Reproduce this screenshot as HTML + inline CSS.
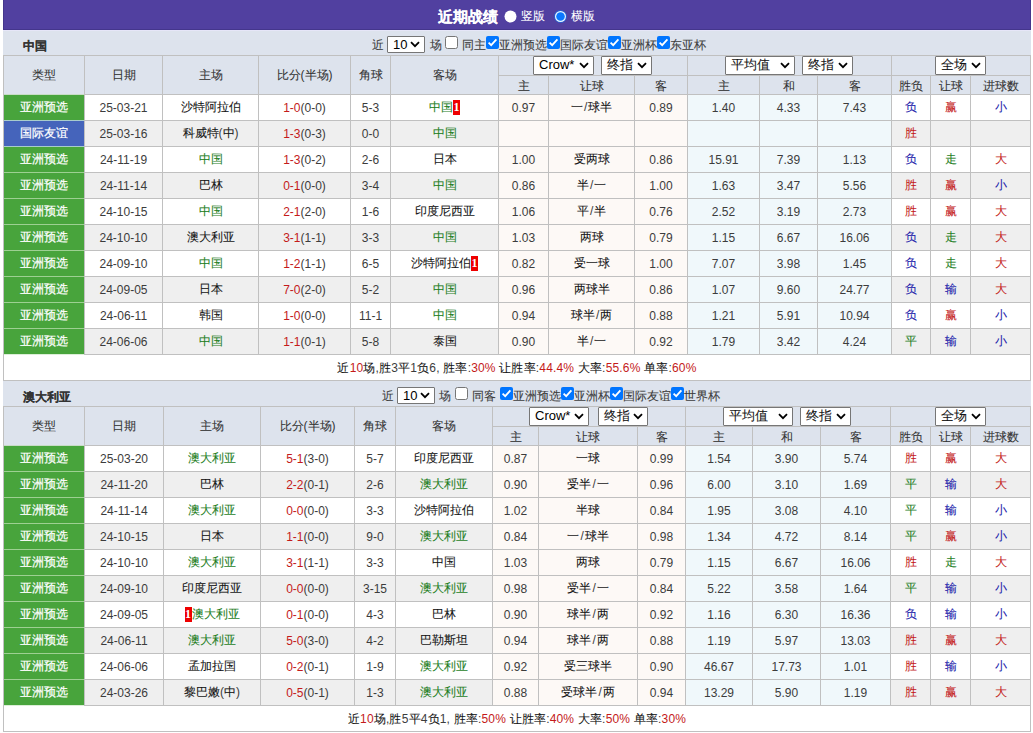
<!DOCTYPE html>
<html><head><meta charset="utf-8"><style>
html,body{margin:0;padding:0;background:#fff;}
body{width:1033px;height:733px;overflow:hidden;position:relative;font-family:"Liberation Sans",sans-serif;font-size:12px;color:#3c3c3c;}
div{position:absolute;box-sizing:border-box;}
.sel{border:1px solid #767676;border-radius:1px;background:#fff;box-sizing:content-box;color:#000;font-size:13px;line-height:17px;}
.sel span{position:absolute;left:5px;top:-1px;}
i{font-style:normal;-webkit-text-stroke:0.08px currentColor;}
div>span>i{color:#151515;}
.ty{font-weight:normal;}
.ty i{-webkit-text-stroke:0.2px #fff;}
.bd{display:inline-block;background:#e00;color:#fff;font-family:"Liberation Serif",serif;font-weight:bold;font-size:12px;line-height:15px;width:7px;text-align:center;}
</style></head><body>
<div style="left:3px;top:0px;width:1028px;height:30px;background:#5140a0;border:1px solid #44368c;border-top:none"></div>
<div style="left:438px;top:8px;white-space:nowrap;font-weight:bold;font-size:15px;color:#fff;line-height:18px;-webkit-text-stroke:0.3px #fff"><i>近期战绩</i></div>
<svg style="position:absolute;left:504px;top:10px" width="13" height="13" viewBox="0 0 13 13"><circle cx="6.5" cy="6.5" r="6" fill="#fff"/></svg>
<div style="left:521px;top:8px;white-space:nowrap;font-size:12px;color:#fff;line-height:16px"><i>竖版</i></div>
<svg style="position:absolute;left:554px;top:10px" width="13" height="13" viewBox="0 0 13 13"><circle cx="6.5" cy="6.5" r="6.5" fill="#2a5fd0"/><circle cx="6.5" cy="6.5" r="5.5" fill="#eaf6ff"/><circle cx="6.5" cy="6.5" r="4.3" fill="#0a78ff"/></svg>
<div style="left:571px;top:8px;white-space:nowrap;font-size:12px;color:#fff;line-height:16px"><i>横版</i></div>
<div style="left:3px;top:30px;width:1028px;height:25px;background:#dde3ed"></div>
<div style="left:23px;top:38px;white-space:nowrap;font-weight:bold;font-size:12px;color:#333;line-height:16px"><i>中国</i></div>

<div style="left:3px;top:55px;width:1028px;height:39px;background:#dde3ed"></div>
<div style="left:4px;top:56px;width:80px;height:38px;display:flex;align-items:center;justify-content:center;padding-top:1px;"><span><span style="color:#333"><i>类型</i></span></span></div>
<div style="left:85px;top:56px;width:77px;height:38px;display:flex;align-items:center;justify-content:center;padding-top:1px;"><span><span style="color:#333"><i>日期</i></span></span></div>
<div style="left:163px;top:56px;width:95px;height:38px;display:flex;align-items:center;justify-content:center;padding-top:1px;"><span><span style="color:#333"><i>主场</i></span></span></div>
<div style="left:259px;top:56px;width:91px;height:38px;display:flex;align-items:center;justify-content:center;padding-top:1px;"><span><span style="color:#333"><i>比分</i>(<i>半场</i>)</span></span></div>
<div style="left:351px;top:56px;width:39px;height:38px;display:flex;align-items:center;justify-content:center;padding-top:1px;"><span><span style="color:#333"><i>角球</i></span></span></div>
<div style="left:391px;top:56px;width:107px;height:38px;display:flex;align-items:center;justify-content:center;padding-top:1px;"><span><span style="color:#333"><i>客场</i></span></span></div>
<div style="left:499px;top:76px;width:49px;height:18px;display:flex;align-items:center;justify-content:center;padding-top:2px;"><span><span style="color:#333"><i>主</i></span></span></div>
<div style="left:549px;top:76px;width:85px;height:18px;display:flex;align-items:center;justify-content:center;padding-top:2px;"><span><span style="color:#333"><i>让球</i></span></span></div>
<div style="left:635px;top:76px;width:52px;height:18px;display:flex;align-items:center;justify-content:center;padding-top:2px;"><span><span style="color:#333"><i>客</i></span></span></div>
<div style="left:688px;top:76px;width:71px;height:18px;display:flex;align-items:center;justify-content:center;padding-top:2px;"><span><span style="color:#333"><i>主</i></span></span></div>
<div style="left:760px;top:76px;width:57px;height:18px;display:flex;align-items:center;justify-content:center;padding-top:2px;"><span><span style="color:#333"><i>和</i></span></span></div>
<div style="left:818px;top:76px;width:73px;height:18px;display:flex;align-items:center;justify-content:center;padding-top:2px;"><span><span style="color:#333"><i>客</i></span></span></div>
<div style="left:892px;top:76px;width:38px;height:18px;display:flex;align-items:center;justify-content:center;padding-top:2px;"><span><span style="color:#333"><i>胜负</i></span></span></div>
<div style="left:931px;top:76px;width:39px;height:18px;display:flex;align-items:center;justify-content:center;padding-top:2px;"><span><span style="color:#333"><i>让球</i></span></span></div>
<div style="left:971px;top:76px;width:59px;height:18px;display:flex;align-items:center;justify-content:center;padding-top:2px;"><span><span style="color:#333"><i>进球数</i></span></span></div>
<div style="left:3px;top:55px;width:1028px;height:1px;background:#c0c0c0"></div>
<div style="left:498px;top:75px;width:533px;height:1px;background:#c0c0c0"></div>
<div style="left:3px;top:94px;width:1028px;height:1px;background:#c0c0c0"></div>
<div style="left:3px;top:55px;width:1px;height:40px;background:#c0c0c0"></div>
<div style="left:84px;top:55px;width:1px;height:40px;background:#c0c0c0"></div>
<div style="left:162px;top:55px;width:1px;height:40px;background:#c0c0c0"></div>
<div style="left:258px;top:55px;width:1px;height:40px;background:#c0c0c0"></div>
<div style="left:350px;top:55px;width:1px;height:40px;background:#c0c0c0"></div>
<div style="left:390px;top:55px;width:1px;height:40px;background:#c0c0c0"></div>
<div style="left:498px;top:55px;width:1px;height:40px;background:#c0c0c0"></div>
<div style="left:687px;top:55px;width:1px;height:40px;background:#c0c0c0"></div>
<div style="left:891px;top:55px;width:1px;height:40px;background:#c0c0c0"></div>
<div style="left:1030px;top:55px;width:1px;height:40px;background:#c0c0c0"></div>
<div style="left:548px;top:75px;width:1px;height:20px;background:#c0c0c0"></div>
<div style="left:634px;top:75px;width:1px;height:20px;background:#c0c0c0"></div>
<div style="left:759px;top:75px;width:1px;height:20px;background:#c0c0c0"></div>
<div style="left:817px;top:75px;width:1px;height:20px;background:#c0c0c0"></div>
<div style="left:930px;top:75px;width:1px;height:20px;background:#c0c0c0"></div>
<div style="left:970px;top:75px;width:1px;height:20px;background:#c0c0c0"></div>
<div class="sel" style="left:387px;top:36px;width:36px;height:15px;"><span>10</span><svg width="10" height="7" viewBox="0 0 10 7" style="position:absolute;right:4px;top:4px"><path d="M1 1.2 L5 5.2 L9 1.2" stroke="#000" stroke-width="1.8" fill="none"/></svg></div>
<div class="sel" style="left:533px;top:56px;width:59px;height:17px;"><span>Crow*</span><svg width="10" height="7" viewBox="0 0 10 7" style="position:absolute;right:4px;top:5px"><path d="M1 1.2 L5 5.2 L9 1.2" stroke="#000" stroke-width="1.8" fill="none"/></svg></div>
<div class="sel" style="left:601px;top:56px;width:49px;height:17px;"><span><i>终指</i></span><svg width="10" height="7" viewBox="0 0 10 7" style="position:absolute;right:4px;top:5px"><path d="M1 1.2 L5 5.2 L9 1.2" stroke="#000" stroke-width="1.8" fill="none"/></svg></div>
<div class="sel" style="left:725px;top:56px;width:68px;height:17px;"><span><i>平均值</i></span><svg width="10" height="7" viewBox="0 0 10 7" style="position:absolute;right:4px;top:5px"><path d="M1 1.2 L5 5.2 L9 1.2" stroke="#000" stroke-width="1.8" fill="none"/></svg></div>
<div class="sel" style="left:802px;top:56px;width:49px;height:17px;"><span><i>终指</i></span><svg width="10" height="7" viewBox="0 0 10 7" style="position:absolute;right:4px;top:5px"><path d="M1 1.2 L5 5.2 L9 1.2" stroke="#000" stroke-width="1.8" fill="none"/></svg></div>
<div class="sel" style="left:935px;top:56px;width:49px;height:17px;"><span><i>全场</i></span><svg width="10" height="7" viewBox="0 0 10 7" style="position:absolute;right:4px;top:5px"><path d="M1 1.2 L5 5.2 L9 1.2" stroke="#000" stroke-width="1.8" fill="none"/></svg></div>
<div style="left:4px;top:95px;width:80px;height:25px;display:flex;align-items:center;justify-content:center;background:#48a43c;"><span><span style="color:#fff"><b class="ty"><i>亚洲预选</i></b></span></span></div>
<div style="left:85px;top:95px;width:77px;height:25px;display:flex;align-items:center;justify-content:center;background:#ffffff;"><span>25-03-21</span></div>
<div style="left:163px;top:95px;width:95px;height:25px;display:flex;align-items:center;justify-content:center;background:#ffffff;"><span><i>沙特阿拉伯</i></span></div>
<div style="left:259px;top:95px;width:91px;height:25px;display:flex;align-items:center;justify-content:center;background:#ffffff;"><span><span style="color:#c41a1a">1-0</span>(0-0)</span></div>
<div style="left:351px;top:95px;width:39px;height:25px;display:flex;align-items:center;justify-content:center;background:#ffffff;"><span>5-3</span></div>
<div style="left:391px;top:95px;width:107px;height:25px;display:flex;align-items:center;justify-content:center;background:#ffffff;"><span><span style="color:#1e7e1e"><i>中国</i><span class="bd">1</span></span></span></div>
<div style="left:499px;top:95px;width:49px;height:25px;display:flex;align-items:center;justify-content:center;background:#fdf9f6;"><span>0.97</span></div>
<div style="left:549px;top:95px;width:85px;height:25px;display:flex;align-items:center;justify-content:center;background:#fdf9f6;"><span><i>一</i><span style="margin:0 1px 0 1.5px">/</span><i>球半</i></span></div>
<div style="left:635px;top:95px;width:52px;height:25px;display:flex;align-items:center;justify-content:center;background:#fdf9f6;"><span>0.89</span></div>
<div style="left:688px;top:95px;width:71px;height:25px;display:flex;align-items:center;justify-content:center;background:#f0f8fb;"><span>1.40</span></div>
<div style="left:760px;top:95px;width:57px;height:25px;display:flex;align-items:center;justify-content:center;background:#f0f8fb;"><span>4.33</span></div>
<div style="left:818px;top:95px;width:73px;height:25px;display:flex;align-items:center;justify-content:center;background:#f0f8fb;"><span>7.43</span></div>
<div style="left:892px;top:95px;width:38px;height:25px;display:flex;align-items:center;justify-content:center;background:#ffffff;"><span><span style="color:#1a1aaa"><i>负</i></span></span></div>
<div style="left:931px;top:95px;width:39px;height:25px;display:flex;align-items:center;justify-content:center;background:#ffffff;"><span><span style="color:#c41a1a"><i>赢</i></span></span></div>
<div style="left:971px;top:95px;width:59px;height:25px;display:flex;align-items:center;justify-content:center;background:#ffffff;"><span><span style="color:#1a1aaa"><i>小</i></span></span></div>
<div style="left:3px;top:120px;width:1028px;height:1px;background:#c0c0c0"></div>
<div style="left:3px;top:94px;width:1px;height:27px;background:#c0c0c0"></div>
<div style="left:84px;top:94px;width:1px;height:27px;background:#c0c0c0"></div>
<div style="left:162px;top:94px;width:1px;height:27px;background:#c0c0c0"></div>
<div style="left:258px;top:94px;width:1px;height:27px;background:#c0c0c0"></div>
<div style="left:350px;top:94px;width:1px;height:27px;background:#c0c0c0"></div>
<div style="left:390px;top:94px;width:1px;height:27px;background:#c0c0c0"></div>
<div style="left:498px;top:94px;width:1px;height:27px;background:#c0c0c0"></div>
<div style="left:548px;top:94px;width:1px;height:27px;background:#c0c0c0"></div>
<div style="left:634px;top:94px;width:1px;height:27px;background:#c0c0c0"></div>
<div style="left:687px;top:94px;width:1px;height:27px;background:#c0c0c0"></div>
<div style="left:759px;top:94px;width:1px;height:27px;background:#c0c0c0"></div>
<div style="left:817px;top:94px;width:1px;height:27px;background:#c0c0c0"></div>
<div style="left:891px;top:94px;width:1px;height:27px;background:#c0c0c0"></div>
<div style="left:930px;top:94px;width:1px;height:27px;background:#c0c0c0"></div>
<div style="left:970px;top:94px;width:1px;height:27px;background:#c0c0c0"></div>
<div style="left:1030px;top:94px;width:1px;height:27px;background:#c0c0c0"></div>
<div style="left:4px;top:121px;width:80px;height:25px;display:flex;align-items:center;justify-content:center;background:#4564bb;"><span><span style="color:#fff"><b class="ty"><i>国际友谊</i></b></span></span></div>
<div style="left:85px;top:121px;width:77px;height:25px;display:flex;align-items:center;justify-content:center;background:#efefef;"><span>25-03-16</span></div>
<div style="left:163px;top:121px;width:95px;height:25px;display:flex;align-items:center;justify-content:center;background:#efefef;"><span><i>科威特</i>(<i>中</i>)</span></div>
<div style="left:259px;top:121px;width:91px;height:25px;display:flex;align-items:center;justify-content:center;background:#efefef;"><span><span style="color:#c41a1a">1-3</span>(0-3)</span></div>
<div style="left:351px;top:121px;width:39px;height:25px;display:flex;align-items:center;justify-content:center;background:#efefef;"><span>0-0</span></div>
<div style="left:391px;top:121px;width:107px;height:25px;display:flex;align-items:center;justify-content:center;background:#efefef;"><span><span style="color:#1e7e1e"><i>中国</i></span></span></div>
<div style="left:499px;top:121px;width:49px;height:25px;display:flex;align-items:center;justify-content:center;background:#fdf9f6;"></div>
<div style="left:549px;top:121px;width:85px;height:25px;display:flex;align-items:center;justify-content:center;background:#fdf9f6;"></div>
<div style="left:635px;top:121px;width:52px;height:25px;display:flex;align-items:center;justify-content:center;background:#fdf9f6;"></div>
<div style="left:688px;top:121px;width:71px;height:25px;display:flex;align-items:center;justify-content:center;background:#f0f8fb;"></div>
<div style="left:760px;top:121px;width:57px;height:25px;display:flex;align-items:center;justify-content:center;background:#f0f8fb;"></div>
<div style="left:818px;top:121px;width:73px;height:25px;display:flex;align-items:center;justify-content:center;background:#f0f8fb;"></div>
<div style="left:892px;top:121px;width:38px;height:25px;display:flex;align-items:center;justify-content:center;background:#efefef;"><span><span style="color:#c41a1a"><i>胜</i></span></span></div>
<div style="left:931px;top:121px;width:39px;height:25px;display:flex;align-items:center;justify-content:center;background:#efefef;"></div>
<div style="left:971px;top:121px;width:59px;height:25px;display:flex;align-items:center;justify-content:center;background:#efefef;"></div>
<div style="left:3px;top:146px;width:1028px;height:1px;background:#c0c0c0"></div>
<div style="left:3px;top:120px;width:1px;height:27px;background:#c0c0c0"></div>
<div style="left:84px;top:120px;width:1px;height:27px;background:#c0c0c0"></div>
<div style="left:162px;top:120px;width:1px;height:27px;background:#c0c0c0"></div>
<div style="left:258px;top:120px;width:1px;height:27px;background:#c0c0c0"></div>
<div style="left:350px;top:120px;width:1px;height:27px;background:#c0c0c0"></div>
<div style="left:390px;top:120px;width:1px;height:27px;background:#c0c0c0"></div>
<div style="left:498px;top:120px;width:1px;height:27px;background:#c0c0c0"></div>
<div style="left:548px;top:120px;width:1px;height:27px;background:#c0c0c0"></div>
<div style="left:634px;top:120px;width:1px;height:27px;background:#c0c0c0"></div>
<div style="left:687px;top:120px;width:1px;height:27px;background:#c0c0c0"></div>
<div style="left:759px;top:120px;width:1px;height:27px;background:#c0c0c0"></div>
<div style="left:817px;top:120px;width:1px;height:27px;background:#c0c0c0"></div>
<div style="left:891px;top:120px;width:1px;height:27px;background:#c0c0c0"></div>
<div style="left:930px;top:120px;width:1px;height:27px;background:#c0c0c0"></div>
<div style="left:970px;top:120px;width:1px;height:27px;background:#c0c0c0"></div>
<div style="left:1030px;top:120px;width:1px;height:27px;background:#c0c0c0"></div>
<div style="left:4px;top:147px;width:80px;height:25px;display:flex;align-items:center;justify-content:center;background:#48a43c;"><span><span style="color:#fff"><b class="ty"><i>亚洲预选</i></b></span></span></div>
<div style="left:85px;top:147px;width:77px;height:25px;display:flex;align-items:center;justify-content:center;background:#ffffff;"><span>24-11-19</span></div>
<div style="left:163px;top:147px;width:95px;height:25px;display:flex;align-items:center;justify-content:center;background:#ffffff;"><span><span style="color:#1e7e1e"><i>中国</i></span></span></div>
<div style="left:259px;top:147px;width:91px;height:25px;display:flex;align-items:center;justify-content:center;background:#ffffff;"><span><span style="color:#c41a1a">1-3</span>(0-2)</span></div>
<div style="left:351px;top:147px;width:39px;height:25px;display:flex;align-items:center;justify-content:center;background:#ffffff;"><span>2-6</span></div>
<div style="left:391px;top:147px;width:107px;height:25px;display:flex;align-items:center;justify-content:center;background:#ffffff;"><span><i>日本</i></span></div>
<div style="left:499px;top:147px;width:49px;height:25px;display:flex;align-items:center;justify-content:center;background:#fdf9f6;"><span>1.00</span></div>
<div style="left:549px;top:147px;width:85px;height:25px;display:flex;align-items:center;justify-content:center;background:#fdf9f6;"><span><i>受两球</i></span></div>
<div style="left:635px;top:147px;width:52px;height:25px;display:flex;align-items:center;justify-content:center;background:#fdf9f6;"><span>0.86</span></div>
<div style="left:688px;top:147px;width:71px;height:25px;display:flex;align-items:center;justify-content:center;background:#f0f8fb;"><span>15.91</span></div>
<div style="left:760px;top:147px;width:57px;height:25px;display:flex;align-items:center;justify-content:center;background:#f0f8fb;"><span>7.39</span></div>
<div style="left:818px;top:147px;width:73px;height:25px;display:flex;align-items:center;justify-content:center;background:#f0f8fb;"><span>1.13</span></div>
<div style="left:892px;top:147px;width:38px;height:25px;display:flex;align-items:center;justify-content:center;background:#ffffff;"><span><span style="color:#1a1aaa"><i>负</i></span></span></div>
<div style="left:931px;top:147px;width:39px;height:25px;display:flex;align-items:center;justify-content:center;background:#ffffff;"><span><span style="color:#1e7e1e"><i>走</i></span></span></div>
<div style="left:971px;top:147px;width:59px;height:25px;display:flex;align-items:center;justify-content:center;background:#ffffff;"><span><span style="color:#c41a1a"><i>大</i></span></span></div>
<div style="left:3px;top:172px;width:1028px;height:1px;background:#c0c0c0"></div>
<div style="left:3px;top:146px;width:1px;height:27px;background:#c0c0c0"></div>
<div style="left:84px;top:146px;width:1px;height:27px;background:#c0c0c0"></div>
<div style="left:162px;top:146px;width:1px;height:27px;background:#c0c0c0"></div>
<div style="left:258px;top:146px;width:1px;height:27px;background:#c0c0c0"></div>
<div style="left:350px;top:146px;width:1px;height:27px;background:#c0c0c0"></div>
<div style="left:390px;top:146px;width:1px;height:27px;background:#c0c0c0"></div>
<div style="left:498px;top:146px;width:1px;height:27px;background:#c0c0c0"></div>
<div style="left:548px;top:146px;width:1px;height:27px;background:#c0c0c0"></div>
<div style="left:634px;top:146px;width:1px;height:27px;background:#c0c0c0"></div>
<div style="left:687px;top:146px;width:1px;height:27px;background:#c0c0c0"></div>
<div style="left:759px;top:146px;width:1px;height:27px;background:#c0c0c0"></div>
<div style="left:817px;top:146px;width:1px;height:27px;background:#c0c0c0"></div>
<div style="left:891px;top:146px;width:1px;height:27px;background:#c0c0c0"></div>
<div style="left:930px;top:146px;width:1px;height:27px;background:#c0c0c0"></div>
<div style="left:970px;top:146px;width:1px;height:27px;background:#c0c0c0"></div>
<div style="left:1030px;top:146px;width:1px;height:27px;background:#c0c0c0"></div>
<div style="left:4px;top:173px;width:80px;height:25px;display:flex;align-items:center;justify-content:center;background:#48a43c;"><span><span style="color:#fff"><b class="ty"><i>亚洲预选</i></b></span></span></div>
<div style="left:85px;top:173px;width:77px;height:25px;display:flex;align-items:center;justify-content:center;background:#efefef;"><span>24-11-14</span></div>
<div style="left:163px;top:173px;width:95px;height:25px;display:flex;align-items:center;justify-content:center;background:#efefef;"><span><i>巴林</i></span></div>
<div style="left:259px;top:173px;width:91px;height:25px;display:flex;align-items:center;justify-content:center;background:#efefef;"><span><span style="color:#c41a1a">0-1</span>(0-0)</span></div>
<div style="left:351px;top:173px;width:39px;height:25px;display:flex;align-items:center;justify-content:center;background:#efefef;"><span>3-4</span></div>
<div style="left:391px;top:173px;width:107px;height:25px;display:flex;align-items:center;justify-content:center;background:#efefef;"><span><span style="color:#1e7e1e"><i>中国</i></span></span></div>
<div style="left:499px;top:173px;width:49px;height:25px;display:flex;align-items:center;justify-content:center;background:#fdf9f6;"><span>0.86</span></div>
<div style="left:549px;top:173px;width:85px;height:25px;display:flex;align-items:center;justify-content:center;background:#fdf9f6;"><span><i>半</i><span style="margin:0 1px 0 1.5px">/</span><i>一</i></span></div>
<div style="left:635px;top:173px;width:52px;height:25px;display:flex;align-items:center;justify-content:center;background:#fdf9f6;"><span>1.00</span></div>
<div style="left:688px;top:173px;width:71px;height:25px;display:flex;align-items:center;justify-content:center;background:#f0f8fb;"><span>1.63</span></div>
<div style="left:760px;top:173px;width:57px;height:25px;display:flex;align-items:center;justify-content:center;background:#f0f8fb;"><span>3.47</span></div>
<div style="left:818px;top:173px;width:73px;height:25px;display:flex;align-items:center;justify-content:center;background:#f0f8fb;"><span>5.56</span></div>
<div style="left:892px;top:173px;width:38px;height:25px;display:flex;align-items:center;justify-content:center;background:#efefef;"><span><span style="color:#c41a1a"><i>胜</i></span></span></div>
<div style="left:931px;top:173px;width:39px;height:25px;display:flex;align-items:center;justify-content:center;background:#efefef;"><span><span style="color:#c41a1a"><i>赢</i></span></span></div>
<div style="left:971px;top:173px;width:59px;height:25px;display:flex;align-items:center;justify-content:center;background:#efefef;"><span><span style="color:#1a1aaa"><i>小</i></span></span></div>
<div style="left:3px;top:198px;width:1028px;height:1px;background:#c0c0c0"></div>
<div style="left:3px;top:172px;width:1px;height:27px;background:#c0c0c0"></div>
<div style="left:84px;top:172px;width:1px;height:27px;background:#c0c0c0"></div>
<div style="left:162px;top:172px;width:1px;height:27px;background:#c0c0c0"></div>
<div style="left:258px;top:172px;width:1px;height:27px;background:#c0c0c0"></div>
<div style="left:350px;top:172px;width:1px;height:27px;background:#c0c0c0"></div>
<div style="left:390px;top:172px;width:1px;height:27px;background:#c0c0c0"></div>
<div style="left:498px;top:172px;width:1px;height:27px;background:#c0c0c0"></div>
<div style="left:548px;top:172px;width:1px;height:27px;background:#c0c0c0"></div>
<div style="left:634px;top:172px;width:1px;height:27px;background:#c0c0c0"></div>
<div style="left:687px;top:172px;width:1px;height:27px;background:#c0c0c0"></div>
<div style="left:759px;top:172px;width:1px;height:27px;background:#c0c0c0"></div>
<div style="left:817px;top:172px;width:1px;height:27px;background:#c0c0c0"></div>
<div style="left:891px;top:172px;width:1px;height:27px;background:#c0c0c0"></div>
<div style="left:930px;top:172px;width:1px;height:27px;background:#c0c0c0"></div>
<div style="left:970px;top:172px;width:1px;height:27px;background:#c0c0c0"></div>
<div style="left:1030px;top:172px;width:1px;height:27px;background:#c0c0c0"></div>
<div style="left:4px;top:199px;width:80px;height:25px;display:flex;align-items:center;justify-content:center;background:#48a43c;"><span><span style="color:#fff"><b class="ty"><i>亚洲预选</i></b></span></span></div>
<div style="left:85px;top:199px;width:77px;height:25px;display:flex;align-items:center;justify-content:center;background:#ffffff;"><span>24-10-15</span></div>
<div style="left:163px;top:199px;width:95px;height:25px;display:flex;align-items:center;justify-content:center;background:#ffffff;"><span><span style="color:#1e7e1e"><i>中国</i></span></span></div>
<div style="left:259px;top:199px;width:91px;height:25px;display:flex;align-items:center;justify-content:center;background:#ffffff;"><span><span style="color:#c41a1a">2-1</span>(2-0)</span></div>
<div style="left:351px;top:199px;width:39px;height:25px;display:flex;align-items:center;justify-content:center;background:#ffffff;"><span>1-6</span></div>
<div style="left:391px;top:199px;width:107px;height:25px;display:flex;align-items:center;justify-content:center;background:#ffffff;"><span><i>印度尼西亚</i></span></div>
<div style="left:499px;top:199px;width:49px;height:25px;display:flex;align-items:center;justify-content:center;background:#fdf9f6;"><span>1.06</span></div>
<div style="left:549px;top:199px;width:85px;height:25px;display:flex;align-items:center;justify-content:center;background:#fdf9f6;"><span><i>平</i><span style="margin:0 1px 0 1.5px">/</span><i>半</i></span></div>
<div style="left:635px;top:199px;width:52px;height:25px;display:flex;align-items:center;justify-content:center;background:#fdf9f6;"><span>0.76</span></div>
<div style="left:688px;top:199px;width:71px;height:25px;display:flex;align-items:center;justify-content:center;background:#f0f8fb;"><span>2.52</span></div>
<div style="left:760px;top:199px;width:57px;height:25px;display:flex;align-items:center;justify-content:center;background:#f0f8fb;"><span>3.19</span></div>
<div style="left:818px;top:199px;width:73px;height:25px;display:flex;align-items:center;justify-content:center;background:#f0f8fb;"><span>2.73</span></div>
<div style="left:892px;top:199px;width:38px;height:25px;display:flex;align-items:center;justify-content:center;background:#ffffff;"><span><span style="color:#c41a1a"><i>胜</i></span></span></div>
<div style="left:931px;top:199px;width:39px;height:25px;display:flex;align-items:center;justify-content:center;background:#ffffff;"><span><span style="color:#c41a1a"><i>赢</i></span></span></div>
<div style="left:971px;top:199px;width:59px;height:25px;display:flex;align-items:center;justify-content:center;background:#ffffff;"><span><span style="color:#c41a1a"><i>大</i></span></span></div>
<div style="left:3px;top:224px;width:1028px;height:1px;background:#c0c0c0"></div>
<div style="left:3px;top:198px;width:1px;height:27px;background:#c0c0c0"></div>
<div style="left:84px;top:198px;width:1px;height:27px;background:#c0c0c0"></div>
<div style="left:162px;top:198px;width:1px;height:27px;background:#c0c0c0"></div>
<div style="left:258px;top:198px;width:1px;height:27px;background:#c0c0c0"></div>
<div style="left:350px;top:198px;width:1px;height:27px;background:#c0c0c0"></div>
<div style="left:390px;top:198px;width:1px;height:27px;background:#c0c0c0"></div>
<div style="left:498px;top:198px;width:1px;height:27px;background:#c0c0c0"></div>
<div style="left:548px;top:198px;width:1px;height:27px;background:#c0c0c0"></div>
<div style="left:634px;top:198px;width:1px;height:27px;background:#c0c0c0"></div>
<div style="left:687px;top:198px;width:1px;height:27px;background:#c0c0c0"></div>
<div style="left:759px;top:198px;width:1px;height:27px;background:#c0c0c0"></div>
<div style="left:817px;top:198px;width:1px;height:27px;background:#c0c0c0"></div>
<div style="left:891px;top:198px;width:1px;height:27px;background:#c0c0c0"></div>
<div style="left:930px;top:198px;width:1px;height:27px;background:#c0c0c0"></div>
<div style="left:970px;top:198px;width:1px;height:27px;background:#c0c0c0"></div>
<div style="left:1030px;top:198px;width:1px;height:27px;background:#c0c0c0"></div>
<div style="left:4px;top:225px;width:80px;height:25px;display:flex;align-items:center;justify-content:center;background:#48a43c;"><span><span style="color:#fff"><b class="ty"><i>亚洲预选</i></b></span></span></div>
<div style="left:85px;top:225px;width:77px;height:25px;display:flex;align-items:center;justify-content:center;background:#efefef;"><span>24-10-10</span></div>
<div style="left:163px;top:225px;width:95px;height:25px;display:flex;align-items:center;justify-content:center;background:#efefef;"><span><i>澳大利亚</i></span></div>
<div style="left:259px;top:225px;width:91px;height:25px;display:flex;align-items:center;justify-content:center;background:#efefef;"><span><span style="color:#c41a1a">3-1</span>(1-1)</span></div>
<div style="left:351px;top:225px;width:39px;height:25px;display:flex;align-items:center;justify-content:center;background:#efefef;"><span>3-3</span></div>
<div style="left:391px;top:225px;width:107px;height:25px;display:flex;align-items:center;justify-content:center;background:#efefef;"><span><span style="color:#1e7e1e"><i>中国</i></span></span></div>
<div style="left:499px;top:225px;width:49px;height:25px;display:flex;align-items:center;justify-content:center;background:#fdf9f6;"><span>1.03</span></div>
<div style="left:549px;top:225px;width:85px;height:25px;display:flex;align-items:center;justify-content:center;background:#fdf9f6;"><span><i>两球</i></span></div>
<div style="left:635px;top:225px;width:52px;height:25px;display:flex;align-items:center;justify-content:center;background:#fdf9f6;"><span>0.79</span></div>
<div style="left:688px;top:225px;width:71px;height:25px;display:flex;align-items:center;justify-content:center;background:#f0f8fb;"><span>1.15</span></div>
<div style="left:760px;top:225px;width:57px;height:25px;display:flex;align-items:center;justify-content:center;background:#f0f8fb;"><span>6.67</span></div>
<div style="left:818px;top:225px;width:73px;height:25px;display:flex;align-items:center;justify-content:center;background:#f0f8fb;"><span>16.06</span></div>
<div style="left:892px;top:225px;width:38px;height:25px;display:flex;align-items:center;justify-content:center;background:#efefef;"><span><span style="color:#1a1aaa"><i>负</i></span></span></div>
<div style="left:931px;top:225px;width:39px;height:25px;display:flex;align-items:center;justify-content:center;background:#efefef;"><span><span style="color:#1e7e1e"><i>走</i></span></span></div>
<div style="left:971px;top:225px;width:59px;height:25px;display:flex;align-items:center;justify-content:center;background:#efefef;"><span><span style="color:#c41a1a"><i>大</i></span></span></div>
<div style="left:3px;top:250px;width:1028px;height:1px;background:#c0c0c0"></div>
<div style="left:3px;top:224px;width:1px;height:27px;background:#c0c0c0"></div>
<div style="left:84px;top:224px;width:1px;height:27px;background:#c0c0c0"></div>
<div style="left:162px;top:224px;width:1px;height:27px;background:#c0c0c0"></div>
<div style="left:258px;top:224px;width:1px;height:27px;background:#c0c0c0"></div>
<div style="left:350px;top:224px;width:1px;height:27px;background:#c0c0c0"></div>
<div style="left:390px;top:224px;width:1px;height:27px;background:#c0c0c0"></div>
<div style="left:498px;top:224px;width:1px;height:27px;background:#c0c0c0"></div>
<div style="left:548px;top:224px;width:1px;height:27px;background:#c0c0c0"></div>
<div style="left:634px;top:224px;width:1px;height:27px;background:#c0c0c0"></div>
<div style="left:687px;top:224px;width:1px;height:27px;background:#c0c0c0"></div>
<div style="left:759px;top:224px;width:1px;height:27px;background:#c0c0c0"></div>
<div style="left:817px;top:224px;width:1px;height:27px;background:#c0c0c0"></div>
<div style="left:891px;top:224px;width:1px;height:27px;background:#c0c0c0"></div>
<div style="left:930px;top:224px;width:1px;height:27px;background:#c0c0c0"></div>
<div style="left:970px;top:224px;width:1px;height:27px;background:#c0c0c0"></div>
<div style="left:1030px;top:224px;width:1px;height:27px;background:#c0c0c0"></div>
<div style="left:4px;top:251px;width:80px;height:25px;display:flex;align-items:center;justify-content:center;background:#48a43c;"><span><span style="color:#fff"><b class="ty"><i>亚洲预选</i></b></span></span></div>
<div style="left:85px;top:251px;width:77px;height:25px;display:flex;align-items:center;justify-content:center;background:#ffffff;"><span>24-09-10</span></div>
<div style="left:163px;top:251px;width:95px;height:25px;display:flex;align-items:center;justify-content:center;background:#ffffff;"><span><span style="color:#1e7e1e"><i>中国</i></span></span></div>
<div style="left:259px;top:251px;width:91px;height:25px;display:flex;align-items:center;justify-content:center;background:#ffffff;"><span><span style="color:#c41a1a">1-2</span>(1-1)</span></div>
<div style="left:351px;top:251px;width:39px;height:25px;display:flex;align-items:center;justify-content:center;background:#ffffff;"><span>6-5</span></div>
<div style="left:391px;top:251px;width:107px;height:25px;display:flex;align-items:center;justify-content:center;background:#ffffff;"><span><i>沙特阿拉伯</i><span class="bd">1</span></span></div>
<div style="left:499px;top:251px;width:49px;height:25px;display:flex;align-items:center;justify-content:center;background:#fdf9f6;"><span>0.82</span></div>
<div style="left:549px;top:251px;width:85px;height:25px;display:flex;align-items:center;justify-content:center;background:#fdf9f6;"><span><i>受一球</i></span></div>
<div style="left:635px;top:251px;width:52px;height:25px;display:flex;align-items:center;justify-content:center;background:#fdf9f6;"><span>1.00</span></div>
<div style="left:688px;top:251px;width:71px;height:25px;display:flex;align-items:center;justify-content:center;background:#f0f8fb;"><span>7.07</span></div>
<div style="left:760px;top:251px;width:57px;height:25px;display:flex;align-items:center;justify-content:center;background:#f0f8fb;"><span>3.98</span></div>
<div style="left:818px;top:251px;width:73px;height:25px;display:flex;align-items:center;justify-content:center;background:#f0f8fb;"><span>1.45</span></div>
<div style="left:892px;top:251px;width:38px;height:25px;display:flex;align-items:center;justify-content:center;background:#ffffff;"><span><span style="color:#1a1aaa"><i>负</i></span></span></div>
<div style="left:931px;top:251px;width:39px;height:25px;display:flex;align-items:center;justify-content:center;background:#ffffff;"><span><span style="color:#1e7e1e"><i>走</i></span></span></div>
<div style="left:971px;top:251px;width:59px;height:25px;display:flex;align-items:center;justify-content:center;background:#ffffff;"><span><span style="color:#c41a1a"><i>大</i></span></span></div>
<div style="left:3px;top:276px;width:1028px;height:1px;background:#c0c0c0"></div>
<div style="left:3px;top:250px;width:1px;height:27px;background:#c0c0c0"></div>
<div style="left:84px;top:250px;width:1px;height:27px;background:#c0c0c0"></div>
<div style="left:162px;top:250px;width:1px;height:27px;background:#c0c0c0"></div>
<div style="left:258px;top:250px;width:1px;height:27px;background:#c0c0c0"></div>
<div style="left:350px;top:250px;width:1px;height:27px;background:#c0c0c0"></div>
<div style="left:390px;top:250px;width:1px;height:27px;background:#c0c0c0"></div>
<div style="left:498px;top:250px;width:1px;height:27px;background:#c0c0c0"></div>
<div style="left:548px;top:250px;width:1px;height:27px;background:#c0c0c0"></div>
<div style="left:634px;top:250px;width:1px;height:27px;background:#c0c0c0"></div>
<div style="left:687px;top:250px;width:1px;height:27px;background:#c0c0c0"></div>
<div style="left:759px;top:250px;width:1px;height:27px;background:#c0c0c0"></div>
<div style="left:817px;top:250px;width:1px;height:27px;background:#c0c0c0"></div>
<div style="left:891px;top:250px;width:1px;height:27px;background:#c0c0c0"></div>
<div style="left:930px;top:250px;width:1px;height:27px;background:#c0c0c0"></div>
<div style="left:970px;top:250px;width:1px;height:27px;background:#c0c0c0"></div>
<div style="left:1030px;top:250px;width:1px;height:27px;background:#c0c0c0"></div>
<div style="left:4px;top:277px;width:80px;height:25px;display:flex;align-items:center;justify-content:center;background:#48a43c;"><span><span style="color:#fff"><b class="ty"><i>亚洲预选</i></b></span></span></div>
<div style="left:85px;top:277px;width:77px;height:25px;display:flex;align-items:center;justify-content:center;background:#efefef;"><span>24-09-05</span></div>
<div style="left:163px;top:277px;width:95px;height:25px;display:flex;align-items:center;justify-content:center;background:#efefef;"><span><i>日本</i></span></div>
<div style="left:259px;top:277px;width:91px;height:25px;display:flex;align-items:center;justify-content:center;background:#efefef;"><span><span style="color:#c41a1a">7-0</span>(2-0)</span></div>
<div style="left:351px;top:277px;width:39px;height:25px;display:flex;align-items:center;justify-content:center;background:#efefef;"><span>5-2</span></div>
<div style="left:391px;top:277px;width:107px;height:25px;display:flex;align-items:center;justify-content:center;background:#efefef;"><span><span style="color:#1e7e1e"><i>中国</i></span></span></div>
<div style="left:499px;top:277px;width:49px;height:25px;display:flex;align-items:center;justify-content:center;background:#fdf9f6;"><span>0.96</span></div>
<div style="left:549px;top:277px;width:85px;height:25px;display:flex;align-items:center;justify-content:center;background:#fdf9f6;"><span><i>两球半</i></span></div>
<div style="left:635px;top:277px;width:52px;height:25px;display:flex;align-items:center;justify-content:center;background:#fdf9f6;"><span>0.86</span></div>
<div style="left:688px;top:277px;width:71px;height:25px;display:flex;align-items:center;justify-content:center;background:#f0f8fb;"><span>1.07</span></div>
<div style="left:760px;top:277px;width:57px;height:25px;display:flex;align-items:center;justify-content:center;background:#f0f8fb;"><span>9.60</span></div>
<div style="left:818px;top:277px;width:73px;height:25px;display:flex;align-items:center;justify-content:center;background:#f0f8fb;"><span>24.77</span></div>
<div style="left:892px;top:277px;width:38px;height:25px;display:flex;align-items:center;justify-content:center;background:#efefef;"><span><span style="color:#1a1aaa"><i>负</i></span></span></div>
<div style="left:931px;top:277px;width:39px;height:25px;display:flex;align-items:center;justify-content:center;background:#efefef;"><span><span style="color:#1a1aaa"><i>输</i></span></span></div>
<div style="left:971px;top:277px;width:59px;height:25px;display:flex;align-items:center;justify-content:center;background:#efefef;"><span><span style="color:#c41a1a"><i>大</i></span></span></div>
<div style="left:3px;top:302px;width:1028px;height:1px;background:#c0c0c0"></div>
<div style="left:3px;top:276px;width:1px;height:27px;background:#c0c0c0"></div>
<div style="left:84px;top:276px;width:1px;height:27px;background:#c0c0c0"></div>
<div style="left:162px;top:276px;width:1px;height:27px;background:#c0c0c0"></div>
<div style="left:258px;top:276px;width:1px;height:27px;background:#c0c0c0"></div>
<div style="left:350px;top:276px;width:1px;height:27px;background:#c0c0c0"></div>
<div style="left:390px;top:276px;width:1px;height:27px;background:#c0c0c0"></div>
<div style="left:498px;top:276px;width:1px;height:27px;background:#c0c0c0"></div>
<div style="left:548px;top:276px;width:1px;height:27px;background:#c0c0c0"></div>
<div style="left:634px;top:276px;width:1px;height:27px;background:#c0c0c0"></div>
<div style="left:687px;top:276px;width:1px;height:27px;background:#c0c0c0"></div>
<div style="left:759px;top:276px;width:1px;height:27px;background:#c0c0c0"></div>
<div style="left:817px;top:276px;width:1px;height:27px;background:#c0c0c0"></div>
<div style="left:891px;top:276px;width:1px;height:27px;background:#c0c0c0"></div>
<div style="left:930px;top:276px;width:1px;height:27px;background:#c0c0c0"></div>
<div style="left:970px;top:276px;width:1px;height:27px;background:#c0c0c0"></div>
<div style="left:1030px;top:276px;width:1px;height:27px;background:#c0c0c0"></div>
<div style="left:4px;top:303px;width:80px;height:25px;display:flex;align-items:center;justify-content:center;background:#48a43c;"><span><span style="color:#fff"><b class="ty"><i>亚洲预选</i></b></span></span></div>
<div style="left:85px;top:303px;width:77px;height:25px;display:flex;align-items:center;justify-content:center;background:#ffffff;"><span>24-06-11</span></div>
<div style="left:163px;top:303px;width:95px;height:25px;display:flex;align-items:center;justify-content:center;background:#ffffff;"><span><i>韩国</i></span></div>
<div style="left:259px;top:303px;width:91px;height:25px;display:flex;align-items:center;justify-content:center;background:#ffffff;"><span><span style="color:#c41a1a">1-0</span>(0-0)</span></div>
<div style="left:351px;top:303px;width:39px;height:25px;display:flex;align-items:center;justify-content:center;background:#ffffff;"><span>11-1</span></div>
<div style="left:391px;top:303px;width:107px;height:25px;display:flex;align-items:center;justify-content:center;background:#ffffff;"><span><span style="color:#1e7e1e"><i>中国</i></span></span></div>
<div style="left:499px;top:303px;width:49px;height:25px;display:flex;align-items:center;justify-content:center;background:#fdf9f6;"><span>0.94</span></div>
<div style="left:549px;top:303px;width:85px;height:25px;display:flex;align-items:center;justify-content:center;background:#fdf9f6;"><span><i>球半</i><span style="margin:0 1px 0 1.5px">/</span><i>两</i></span></div>
<div style="left:635px;top:303px;width:52px;height:25px;display:flex;align-items:center;justify-content:center;background:#fdf9f6;"><span>0.88</span></div>
<div style="left:688px;top:303px;width:71px;height:25px;display:flex;align-items:center;justify-content:center;background:#f0f8fb;"><span>1.21</span></div>
<div style="left:760px;top:303px;width:57px;height:25px;display:flex;align-items:center;justify-content:center;background:#f0f8fb;"><span>5.91</span></div>
<div style="left:818px;top:303px;width:73px;height:25px;display:flex;align-items:center;justify-content:center;background:#f0f8fb;"><span>10.94</span></div>
<div style="left:892px;top:303px;width:38px;height:25px;display:flex;align-items:center;justify-content:center;background:#ffffff;"><span><span style="color:#1a1aaa"><i>负</i></span></span></div>
<div style="left:931px;top:303px;width:39px;height:25px;display:flex;align-items:center;justify-content:center;background:#ffffff;"><span><span style="color:#c41a1a"><i>赢</i></span></span></div>
<div style="left:971px;top:303px;width:59px;height:25px;display:flex;align-items:center;justify-content:center;background:#ffffff;"><span><span style="color:#1a1aaa"><i>小</i></span></span></div>
<div style="left:3px;top:328px;width:1028px;height:1px;background:#c0c0c0"></div>
<div style="left:3px;top:302px;width:1px;height:27px;background:#c0c0c0"></div>
<div style="left:84px;top:302px;width:1px;height:27px;background:#c0c0c0"></div>
<div style="left:162px;top:302px;width:1px;height:27px;background:#c0c0c0"></div>
<div style="left:258px;top:302px;width:1px;height:27px;background:#c0c0c0"></div>
<div style="left:350px;top:302px;width:1px;height:27px;background:#c0c0c0"></div>
<div style="left:390px;top:302px;width:1px;height:27px;background:#c0c0c0"></div>
<div style="left:498px;top:302px;width:1px;height:27px;background:#c0c0c0"></div>
<div style="left:548px;top:302px;width:1px;height:27px;background:#c0c0c0"></div>
<div style="left:634px;top:302px;width:1px;height:27px;background:#c0c0c0"></div>
<div style="left:687px;top:302px;width:1px;height:27px;background:#c0c0c0"></div>
<div style="left:759px;top:302px;width:1px;height:27px;background:#c0c0c0"></div>
<div style="left:817px;top:302px;width:1px;height:27px;background:#c0c0c0"></div>
<div style="left:891px;top:302px;width:1px;height:27px;background:#c0c0c0"></div>
<div style="left:930px;top:302px;width:1px;height:27px;background:#c0c0c0"></div>
<div style="left:970px;top:302px;width:1px;height:27px;background:#c0c0c0"></div>
<div style="left:1030px;top:302px;width:1px;height:27px;background:#c0c0c0"></div>
<div style="left:4px;top:329px;width:80px;height:25px;display:flex;align-items:center;justify-content:center;background:#48a43c;"><span><span style="color:#fff"><b class="ty"><i>亚洲预选</i></b></span></span></div>
<div style="left:85px;top:329px;width:77px;height:25px;display:flex;align-items:center;justify-content:center;background:#efefef;"><span>24-06-06</span></div>
<div style="left:163px;top:329px;width:95px;height:25px;display:flex;align-items:center;justify-content:center;background:#efefef;"><span><span style="color:#1e7e1e"><i>中国</i></span></span></div>
<div style="left:259px;top:329px;width:91px;height:25px;display:flex;align-items:center;justify-content:center;background:#efefef;"><span><span style="color:#c41a1a">1-1</span>(0-1)</span></div>
<div style="left:351px;top:329px;width:39px;height:25px;display:flex;align-items:center;justify-content:center;background:#efefef;"><span>5-8</span></div>
<div style="left:391px;top:329px;width:107px;height:25px;display:flex;align-items:center;justify-content:center;background:#efefef;"><span><i>泰国</i></span></div>
<div style="left:499px;top:329px;width:49px;height:25px;display:flex;align-items:center;justify-content:center;background:#fdf9f6;"><span>0.90</span></div>
<div style="left:549px;top:329px;width:85px;height:25px;display:flex;align-items:center;justify-content:center;background:#fdf9f6;"><span><i>半</i><span style="margin:0 1px 0 1.5px">/</span><i>一</i></span></div>
<div style="left:635px;top:329px;width:52px;height:25px;display:flex;align-items:center;justify-content:center;background:#fdf9f6;"><span>0.92</span></div>
<div style="left:688px;top:329px;width:71px;height:25px;display:flex;align-items:center;justify-content:center;background:#f0f8fb;"><span>1.79</span></div>
<div style="left:760px;top:329px;width:57px;height:25px;display:flex;align-items:center;justify-content:center;background:#f0f8fb;"><span>3.42</span></div>
<div style="left:818px;top:329px;width:73px;height:25px;display:flex;align-items:center;justify-content:center;background:#f0f8fb;"><span>4.24</span></div>
<div style="left:892px;top:329px;width:38px;height:25px;display:flex;align-items:center;justify-content:center;background:#efefef;"><span><span style="color:#1e7e1e"><i>平</i></span></span></div>
<div style="left:931px;top:329px;width:39px;height:25px;display:flex;align-items:center;justify-content:center;background:#efefef;"><span><span style="color:#1a1aaa"><i>输</i></span></span></div>
<div style="left:971px;top:329px;width:59px;height:25px;display:flex;align-items:center;justify-content:center;background:#efefef;"><span><span style="color:#1a1aaa"><i>小</i></span></span></div>
<div style="left:3px;top:354px;width:1028px;height:1px;background:#c0c0c0"></div>
<div style="left:3px;top:328px;width:1px;height:27px;background:#c0c0c0"></div>
<div style="left:84px;top:328px;width:1px;height:27px;background:#c0c0c0"></div>
<div style="left:162px;top:328px;width:1px;height:27px;background:#c0c0c0"></div>
<div style="left:258px;top:328px;width:1px;height:27px;background:#c0c0c0"></div>
<div style="left:350px;top:328px;width:1px;height:27px;background:#c0c0c0"></div>
<div style="left:390px;top:328px;width:1px;height:27px;background:#c0c0c0"></div>
<div style="left:498px;top:328px;width:1px;height:27px;background:#c0c0c0"></div>
<div style="left:548px;top:328px;width:1px;height:27px;background:#c0c0c0"></div>
<div style="left:634px;top:328px;width:1px;height:27px;background:#c0c0c0"></div>
<div style="left:687px;top:328px;width:1px;height:27px;background:#c0c0c0"></div>
<div style="left:759px;top:328px;width:1px;height:27px;background:#c0c0c0"></div>
<div style="left:817px;top:328px;width:1px;height:27px;background:#c0c0c0"></div>
<div style="left:891px;top:328px;width:1px;height:27px;background:#c0c0c0"></div>
<div style="left:930px;top:328px;width:1px;height:27px;background:#c0c0c0"></div>
<div style="left:970px;top:328px;width:1px;height:27px;background:#c0c0c0"></div>
<div style="left:1030px;top:328px;width:1px;height:27px;background:#c0c0c0"></div>
<div style="left:4px;top:94px;width:80px;height:1px;background:#c8dcc6"></div>
<div style="left:4px;top:120px;width:80px;height:1px;background:#a8cccc"></div>
<div style="left:4px;top:146px;width:80px;height:1px;background:#a8cccc"></div>
<div style="left:4px;top:172px;width:80px;height:1px;background:#9dd092"></div>
<div style="left:4px;top:198px;width:80px;height:1px;background:#9dd092"></div>
<div style="left:4px;top:224px;width:80px;height:1px;background:#9dd092"></div>
<div style="left:4px;top:250px;width:80px;height:1px;background:#9dd092"></div>
<div style="left:4px;top:276px;width:80px;height:1px;background:#9dd092"></div>
<div style="left:4px;top:302px;width:80px;height:1px;background:#9dd092"></div>
<div style="left:4px;top:328px;width:80px;height:1px;background:#9dd092"></div>
<div style="left:4px;top:354px;width:80px;height:1px;background:#dcefd8"></div>
<div style="left:4px;top:355px;width:1026px;height:25px;display:flex;align-items:center;justify-content:center;background:#fff;letter-spacing:0.18px;padding-top:2px;"><span><i>近</i><span style="color:#c41a1a">10</span><i>场</i>,<i>胜</i>3<i>平</i>1<i>负</i>6, <i>胜率</i>:<span style="color:#c41a1a">30%</span> <i>让胜率</i>:<span style="color:#c41a1a">44.4%</span> <i>大率</i>:<span style="color:#c41a1a">55.6%</span> <i>单率</i>:<span style="color:#c41a1a">60%</span></span></div>
<div style="left:3px;top:380px;width:1028px;height:1px;background:#c0c0c0"></div>
<div style="left:3px;top:354px;width:1px;height:27px;background:#c0c0c0"></div>
<div style="left:1030px;top:354px;width:1px;height:27px;background:#c0c0c0"></div>
<div style="left:3px;top:30px;width:1028px;height:1px;background:#e6e6f8"></div>
<div style="left:372px;top:35px;white-space:nowrap;font-size:12px;line-height:18px;margin-top:1px"><i>近</i></div>
<div style="left:430px;top:35px;white-space:nowrap;font-size:12px;line-height:18px;margin-top:1px"><i>场</i></div>
<svg style="position:absolute;left:445px;top:36px" width="13" height="13" viewBox="0 0 13 13"><rect x="0.5" y="0.5" width="12" height="12" rx="2" fill="#fff" stroke="#767676"/></svg>
<div style="left:462px;top:35px;white-space:nowrap;font-size:12px;line-height:18px;margin-top:1px"><i>同主</i></div>
<svg style="position:absolute;left:486px;top:36px" width="13" height="13" viewBox="0 0 13 13"><rect x="0" y="0" width="13" height="13" rx="2" fill="#0075ff"/><path d="M2.6 6.6 L5.2 9.2 L10.4 3.4" stroke="#fff" stroke-width="1.8" fill="none"/></svg>
<div style="left:499px;top:35px;white-space:nowrap;font-size:12px;line-height:18px;margin-top:1px"><i>亚洲预选</i></div>
<svg style="position:absolute;left:547px;top:36px" width="13" height="13" viewBox="0 0 13 13"><rect x="0" y="0" width="13" height="13" rx="2" fill="#0075ff"/><path d="M2.6 6.6 L5.2 9.2 L10.4 3.4" stroke="#fff" stroke-width="1.8" fill="none"/></svg>
<div style="left:560px;top:35px;white-space:nowrap;font-size:12px;line-height:18px;margin-top:1px"><i>国际友谊</i></div>
<svg style="position:absolute;left:608px;top:36px" width="13" height="13" viewBox="0 0 13 13"><rect x="0" y="0" width="13" height="13" rx="2" fill="#0075ff"/><path d="M2.6 6.6 L5.2 9.2 L10.4 3.4" stroke="#fff" stroke-width="1.8" fill="none"/></svg>
<div style="left:621px;top:35px;white-space:nowrap;font-size:12px;line-height:18px;margin-top:1px"><i>亚洲杯</i></div>
<svg style="position:absolute;left:657px;top:36px" width="13" height="13" viewBox="0 0 13 13"><rect x="0" y="0" width="13" height="13" rx="2" fill="#0075ff"/><path d="M2.6 6.6 L5.2 9.2 L10.4 3.4" stroke="#fff" stroke-width="1.8" fill="none"/></svg>
<div style="left:670px;top:35px;white-space:nowrap;font-size:12px;line-height:18px;margin-top:1px"><i>东亚杯</i></div>
<div style="left:3px;top:381px;width:1028px;height:25px;background:#dde3ed"></div>
<div style="left:23px;top:389px;white-space:nowrap;font-weight:bold;font-size:12px;color:#333;line-height:16px"><i>澳大利亚</i></div>

<div style="left:3px;top:406px;width:1028px;height:39px;background:#dde3ed"></div>
<div style="left:4px;top:407px;width:80px;height:38px;display:flex;align-items:center;justify-content:center;padding-top:1px;"><span><span style="color:#333"><i>类型</i></span></span></div>
<div style="left:85px;top:407px;width:78px;height:38px;display:flex;align-items:center;justify-content:center;padding-top:1px;"><span><span style="color:#333"><i>日期</i></span></span></div>
<div style="left:164px;top:407px;width:96px;height:38px;display:flex;align-items:center;justify-content:center;padding-top:1px;"><span><span style="color:#333"><i>主场</i></span></span></div>
<div style="left:261px;top:407px;width:93px;height:38px;display:flex;align-items:center;justify-content:center;padding-top:1px;"><span><span style="color:#333"><i>比分</i>(<i>半场</i>)</span></span></div>
<div style="left:355px;top:407px;width:40px;height:38px;display:flex;align-items:center;justify-content:center;padding-top:1px;"><span><span style="color:#333"><i>角球</i></span></span></div>
<div style="left:396px;top:407px;width:96px;height:38px;display:flex;align-items:center;justify-content:center;padding-top:1px;"><span><span style="color:#333"><i>客场</i></span></span></div>
<div style="left:493px;top:427px;width:45px;height:18px;display:flex;align-items:center;justify-content:center;padding-top:2px;"><span><span style="color:#333"><i>主</i></span></span></div>
<div style="left:539px;top:427px;width:98px;height:18px;display:flex;align-items:center;justify-content:center;padding-top:2px;"><span><span style="color:#333"><i>让球</i></span></span></div>
<div style="left:638px;top:427px;width:47px;height:18px;display:flex;align-items:center;justify-content:center;padding-top:2px;"><span><span style="color:#333"><i>客</i></span></span></div>
<div style="left:686px;top:427px;width:66px;height:18px;display:flex;align-items:center;justify-content:center;padding-top:2px;"><span><span style="color:#333"><i>主</i></span></span></div>
<div style="left:753px;top:427px;width:67px;height:18px;display:flex;align-items:center;justify-content:center;padding-top:2px;"><span><span style="color:#333"><i>和</i></span></span></div>
<div style="left:821px;top:427px;width:69px;height:18px;display:flex;align-items:center;justify-content:center;padding-top:2px;"><span><span style="color:#333"><i>客</i></span></span></div>
<div style="left:891px;top:427px;width:39px;height:18px;display:flex;align-items:center;justify-content:center;padding-top:2px;"><span><span style="color:#333"><i>胜负</i></span></span></div>
<div style="left:931px;top:427px;width:39px;height:18px;display:flex;align-items:center;justify-content:center;padding-top:2px;"><span><span style="color:#333"><i>让球</i></span></span></div>
<div style="left:971px;top:427px;width:59px;height:18px;display:flex;align-items:center;justify-content:center;padding-top:2px;"><span><span style="color:#333"><i>进球数</i></span></span></div>
<div style="left:3px;top:406px;width:1028px;height:1px;background:#c0c0c0"></div>
<div style="left:492px;top:426px;width:539px;height:1px;background:#c0c0c0"></div>
<div style="left:3px;top:445px;width:1028px;height:1px;background:#c0c0c0"></div>
<div style="left:3px;top:406px;width:1px;height:40px;background:#c0c0c0"></div>
<div style="left:84px;top:406px;width:1px;height:40px;background:#c0c0c0"></div>
<div style="left:163px;top:406px;width:1px;height:40px;background:#c0c0c0"></div>
<div style="left:260px;top:406px;width:1px;height:40px;background:#c0c0c0"></div>
<div style="left:354px;top:406px;width:1px;height:40px;background:#c0c0c0"></div>
<div style="left:395px;top:406px;width:1px;height:40px;background:#c0c0c0"></div>
<div style="left:492px;top:406px;width:1px;height:40px;background:#c0c0c0"></div>
<div style="left:685px;top:406px;width:1px;height:40px;background:#c0c0c0"></div>
<div style="left:890px;top:406px;width:1px;height:40px;background:#c0c0c0"></div>
<div style="left:1030px;top:406px;width:1px;height:40px;background:#c0c0c0"></div>
<div style="left:538px;top:426px;width:1px;height:20px;background:#c0c0c0"></div>
<div style="left:637px;top:426px;width:1px;height:20px;background:#c0c0c0"></div>
<div style="left:752px;top:426px;width:1px;height:20px;background:#c0c0c0"></div>
<div style="left:820px;top:426px;width:1px;height:20px;background:#c0c0c0"></div>
<div style="left:930px;top:426px;width:1px;height:20px;background:#c0c0c0"></div>
<div style="left:970px;top:426px;width:1px;height:20px;background:#c0c0c0"></div>
<div class="sel" style="left:397px;top:387px;width:36px;height:15px;"><span>10</span><svg width="10" height="7" viewBox="0 0 10 7" style="position:absolute;right:4px;top:4px"><path d="M1 1.2 L5 5.2 L9 1.2" stroke="#000" stroke-width="1.8" fill="none"/></svg></div>
<div class="sel" style="left:529px;top:407px;width:58px;height:17px;"><span>Crow*</span><svg width="10" height="7" viewBox="0 0 10 7" style="position:absolute;right:4px;top:5px"><path d="M1 1.2 L5 5.2 L9 1.2" stroke="#000" stroke-width="1.8" fill="none"/></svg></div>
<div class="sel" style="left:598px;top:407px;width:48px;height:17px;"><span><i>终指</i></span><svg width="10" height="7" viewBox="0 0 10 7" style="position:absolute;right:4px;top:5px"><path d="M1 1.2 L5 5.2 L9 1.2" stroke="#000" stroke-width="1.8" fill="none"/></svg></div>
<div class="sel" style="left:723px;top:407px;width:68px;height:17px;"><span><i>平均值</i></span><svg width="10" height="7" viewBox="0 0 10 7" style="position:absolute;right:4px;top:5px"><path d="M1 1.2 L5 5.2 L9 1.2" stroke="#000" stroke-width="1.8" fill="none"/></svg></div>
<div class="sel" style="left:800px;top:407px;width:49px;height:17px;"><span><i>终指</i></span><svg width="10" height="7" viewBox="0 0 10 7" style="position:absolute;right:4px;top:5px"><path d="M1 1.2 L5 5.2 L9 1.2" stroke="#000" stroke-width="1.8" fill="none"/></svg></div>
<div class="sel" style="left:935px;top:407px;width:49px;height:17px;"><span><i>全场</i></span><svg width="10" height="7" viewBox="0 0 10 7" style="position:absolute;right:4px;top:5px"><path d="M1 1.2 L5 5.2 L9 1.2" stroke="#000" stroke-width="1.8" fill="none"/></svg></div>
<div style="left:4px;top:446px;width:80px;height:25px;display:flex;align-items:center;justify-content:center;background:#48a43c;"><span><span style="color:#fff"><b class="ty"><i>亚洲预选</i></b></span></span></div>
<div style="left:85px;top:446px;width:78px;height:25px;display:flex;align-items:center;justify-content:center;background:#ffffff;"><span>25-03-20</span></div>
<div style="left:164px;top:446px;width:96px;height:25px;display:flex;align-items:center;justify-content:center;background:#ffffff;"><span><span style="color:#1e7e1e"><i>澳大利亚</i></span></span></div>
<div style="left:261px;top:446px;width:93px;height:25px;display:flex;align-items:center;justify-content:center;background:#ffffff;"><span><span style="color:#c41a1a">5-1</span>(3-0)</span></div>
<div style="left:355px;top:446px;width:40px;height:25px;display:flex;align-items:center;justify-content:center;background:#ffffff;"><span>5-7</span></div>
<div style="left:396px;top:446px;width:96px;height:25px;display:flex;align-items:center;justify-content:center;background:#ffffff;"><span><i>印度尼西亚</i></span></div>
<div style="left:493px;top:446px;width:45px;height:25px;display:flex;align-items:center;justify-content:center;background:#fdf9f6;"><span>0.87</span></div>
<div style="left:539px;top:446px;width:98px;height:25px;display:flex;align-items:center;justify-content:center;background:#fdf9f6;"><span><i>一球</i></span></div>
<div style="left:638px;top:446px;width:47px;height:25px;display:flex;align-items:center;justify-content:center;background:#fdf9f6;"><span>0.99</span></div>
<div style="left:686px;top:446px;width:66px;height:25px;display:flex;align-items:center;justify-content:center;background:#f0f8fb;"><span>1.54</span></div>
<div style="left:753px;top:446px;width:67px;height:25px;display:flex;align-items:center;justify-content:center;background:#f0f8fb;"><span>3.90</span></div>
<div style="left:821px;top:446px;width:69px;height:25px;display:flex;align-items:center;justify-content:center;background:#f0f8fb;"><span>5.74</span></div>
<div style="left:891px;top:446px;width:39px;height:25px;display:flex;align-items:center;justify-content:center;background:#ffffff;"><span><span style="color:#c41a1a"><i>胜</i></span></span></div>
<div style="left:931px;top:446px;width:39px;height:25px;display:flex;align-items:center;justify-content:center;background:#ffffff;"><span><span style="color:#c41a1a"><i>赢</i></span></span></div>
<div style="left:971px;top:446px;width:59px;height:25px;display:flex;align-items:center;justify-content:center;background:#ffffff;"><span><span style="color:#c41a1a"><i>大</i></span></span></div>
<div style="left:3px;top:471px;width:1028px;height:1px;background:#c0c0c0"></div>
<div style="left:3px;top:445px;width:1px;height:27px;background:#c0c0c0"></div>
<div style="left:84px;top:445px;width:1px;height:27px;background:#c0c0c0"></div>
<div style="left:163px;top:445px;width:1px;height:27px;background:#c0c0c0"></div>
<div style="left:260px;top:445px;width:1px;height:27px;background:#c0c0c0"></div>
<div style="left:354px;top:445px;width:1px;height:27px;background:#c0c0c0"></div>
<div style="left:395px;top:445px;width:1px;height:27px;background:#c0c0c0"></div>
<div style="left:492px;top:445px;width:1px;height:27px;background:#c0c0c0"></div>
<div style="left:538px;top:445px;width:1px;height:27px;background:#c0c0c0"></div>
<div style="left:637px;top:445px;width:1px;height:27px;background:#c0c0c0"></div>
<div style="left:685px;top:445px;width:1px;height:27px;background:#c0c0c0"></div>
<div style="left:752px;top:445px;width:1px;height:27px;background:#c0c0c0"></div>
<div style="left:820px;top:445px;width:1px;height:27px;background:#c0c0c0"></div>
<div style="left:890px;top:445px;width:1px;height:27px;background:#c0c0c0"></div>
<div style="left:930px;top:445px;width:1px;height:27px;background:#c0c0c0"></div>
<div style="left:970px;top:445px;width:1px;height:27px;background:#c0c0c0"></div>
<div style="left:1030px;top:445px;width:1px;height:27px;background:#c0c0c0"></div>
<div style="left:4px;top:472px;width:80px;height:25px;display:flex;align-items:center;justify-content:center;background:#48a43c;"><span><span style="color:#fff"><b class="ty"><i>亚洲预选</i></b></span></span></div>
<div style="left:85px;top:472px;width:78px;height:25px;display:flex;align-items:center;justify-content:center;background:#efefef;"><span>24-11-20</span></div>
<div style="left:164px;top:472px;width:96px;height:25px;display:flex;align-items:center;justify-content:center;background:#efefef;"><span><i>巴林</i></span></div>
<div style="left:261px;top:472px;width:93px;height:25px;display:flex;align-items:center;justify-content:center;background:#efefef;"><span><span style="color:#c41a1a">2-2</span>(0-1)</span></div>
<div style="left:355px;top:472px;width:40px;height:25px;display:flex;align-items:center;justify-content:center;background:#efefef;"><span>2-6</span></div>
<div style="left:396px;top:472px;width:96px;height:25px;display:flex;align-items:center;justify-content:center;background:#efefef;"><span><span style="color:#1e7e1e"><i>澳大利亚</i></span></span></div>
<div style="left:493px;top:472px;width:45px;height:25px;display:flex;align-items:center;justify-content:center;background:#fdf9f6;"><span>0.90</span></div>
<div style="left:539px;top:472px;width:98px;height:25px;display:flex;align-items:center;justify-content:center;background:#fdf9f6;"><span><i>受半</i><span style="margin:0 1px 0 1.5px">/</span><i>一</i></span></div>
<div style="left:638px;top:472px;width:47px;height:25px;display:flex;align-items:center;justify-content:center;background:#fdf9f6;"><span>0.96</span></div>
<div style="left:686px;top:472px;width:66px;height:25px;display:flex;align-items:center;justify-content:center;background:#f0f8fb;"><span>6.00</span></div>
<div style="left:753px;top:472px;width:67px;height:25px;display:flex;align-items:center;justify-content:center;background:#f0f8fb;"><span>3.10</span></div>
<div style="left:821px;top:472px;width:69px;height:25px;display:flex;align-items:center;justify-content:center;background:#f0f8fb;"><span>1.69</span></div>
<div style="left:891px;top:472px;width:39px;height:25px;display:flex;align-items:center;justify-content:center;background:#efefef;"><span><span style="color:#1e7e1e"><i>平</i></span></span></div>
<div style="left:931px;top:472px;width:39px;height:25px;display:flex;align-items:center;justify-content:center;background:#efefef;"><span><span style="color:#1a1aaa"><i>输</i></span></span></div>
<div style="left:971px;top:472px;width:59px;height:25px;display:flex;align-items:center;justify-content:center;background:#efefef;"><span><span style="color:#c41a1a"><i>大</i></span></span></div>
<div style="left:3px;top:497px;width:1028px;height:1px;background:#c0c0c0"></div>
<div style="left:3px;top:471px;width:1px;height:27px;background:#c0c0c0"></div>
<div style="left:84px;top:471px;width:1px;height:27px;background:#c0c0c0"></div>
<div style="left:163px;top:471px;width:1px;height:27px;background:#c0c0c0"></div>
<div style="left:260px;top:471px;width:1px;height:27px;background:#c0c0c0"></div>
<div style="left:354px;top:471px;width:1px;height:27px;background:#c0c0c0"></div>
<div style="left:395px;top:471px;width:1px;height:27px;background:#c0c0c0"></div>
<div style="left:492px;top:471px;width:1px;height:27px;background:#c0c0c0"></div>
<div style="left:538px;top:471px;width:1px;height:27px;background:#c0c0c0"></div>
<div style="left:637px;top:471px;width:1px;height:27px;background:#c0c0c0"></div>
<div style="left:685px;top:471px;width:1px;height:27px;background:#c0c0c0"></div>
<div style="left:752px;top:471px;width:1px;height:27px;background:#c0c0c0"></div>
<div style="left:820px;top:471px;width:1px;height:27px;background:#c0c0c0"></div>
<div style="left:890px;top:471px;width:1px;height:27px;background:#c0c0c0"></div>
<div style="left:930px;top:471px;width:1px;height:27px;background:#c0c0c0"></div>
<div style="left:970px;top:471px;width:1px;height:27px;background:#c0c0c0"></div>
<div style="left:1030px;top:471px;width:1px;height:27px;background:#c0c0c0"></div>
<div style="left:4px;top:498px;width:80px;height:25px;display:flex;align-items:center;justify-content:center;background:#48a43c;"><span><span style="color:#fff"><b class="ty"><i>亚洲预选</i></b></span></span></div>
<div style="left:85px;top:498px;width:78px;height:25px;display:flex;align-items:center;justify-content:center;background:#ffffff;"><span>24-11-14</span></div>
<div style="left:164px;top:498px;width:96px;height:25px;display:flex;align-items:center;justify-content:center;background:#ffffff;"><span><span style="color:#1e7e1e"><i>澳大利亚</i></span></span></div>
<div style="left:261px;top:498px;width:93px;height:25px;display:flex;align-items:center;justify-content:center;background:#ffffff;"><span><span style="color:#c41a1a">0-0</span>(0-0)</span></div>
<div style="left:355px;top:498px;width:40px;height:25px;display:flex;align-items:center;justify-content:center;background:#ffffff;"><span>3-3</span></div>
<div style="left:396px;top:498px;width:96px;height:25px;display:flex;align-items:center;justify-content:center;background:#ffffff;"><span><i>沙特阿拉伯</i></span></div>
<div style="left:493px;top:498px;width:45px;height:25px;display:flex;align-items:center;justify-content:center;background:#fdf9f6;"><span>1.02</span></div>
<div style="left:539px;top:498px;width:98px;height:25px;display:flex;align-items:center;justify-content:center;background:#fdf9f6;"><span><i>半球</i></span></div>
<div style="left:638px;top:498px;width:47px;height:25px;display:flex;align-items:center;justify-content:center;background:#fdf9f6;"><span>0.84</span></div>
<div style="left:686px;top:498px;width:66px;height:25px;display:flex;align-items:center;justify-content:center;background:#f0f8fb;"><span>1.95</span></div>
<div style="left:753px;top:498px;width:67px;height:25px;display:flex;align-items:center;justify-content:center;background:#f0f8fb;"><span>3.08</span></div>
<div style="left:821px;top:498px;width:69px;height:25px;display:flex;align-items:center;justify-content:center;background:#f0f8fb;"><span>4.10</span></div>
<div style="left:891px;top:498px;width:39px;height:25px;display:flex;align-items:center;justify-content:center;background:#ffffff;"><span><span style="color:#1e7e1e"><i>平</i></span></span></div>
<div style="left:931px;top:498px;width:39px;height:25px;display:flex;align-items:center;justify-content:center;background:#ffffff;"><span><span style="color:#1a1aaa"><i>输</i></span></span></div>
<div style="left:971px;top:498px;width:59px;height:25px;display:flex;align-items:center;justify-content:center;background:#ffffff;"><span><span style="color:#1a1aaa"><i>小</i></span></span></div>
<div style="left:3px;top:523px;width:1028px;height:1px;background:#c0c0c0"></div>
<div style="left:3px;top:497px;width:1px;height:27px;background:#c0c0c0"></div>
<div style="left:84px;top:497px;width:1px;height:27px;background:#c0c0c0"></div>
<div style="left:163px;top:497px;width:1px;height:27px;background:#c0c0c0"></div>
<div style="left:260px;top:497px;width:1px;height:27px;background:#c0c0c0"></div>
<div style="left:354px;top:497px;width:1px;height:27px;background:#c0c0c0"></div>
<div style="left:395px;top:497px;width:1px;height:27px;background:#c0c0c0"></div>
<div style="left:492px;top:497px;width:1px;height:27px;background:#c0c0c0"></div>
<div style="left:538px;top:497px;width:1px;height:27px;background:#c0c0c0"></div>
<div style="left:637px;top:497px;width:1px;height:27px;background:#c0c0c0"></div>
<div style="left:685px;top:497px;width:1px;height:27px;background:#c0c0c0"></div>
<div style="left:752px;top:497px;width:1px;height:27px;background:#c0c0c0"></div>
<div style="left:820px;top:497px;width:1px;height:27px;background:#c0c0c0"></div>
<div style="left:890px;top:497px;width:1px;height:27px;background:#c0c0c0"></div>
<div style="left:930px;top:497px;width:1px;height:27px;background:#c0c0c0"></div>
<div style="left:970px;top:497px;width:1px;height:27px;background:#c0c0c0"></div>
<div style="left:1030px;top:497px;width:1px;height:27px;background:#c0c0c0"></div>
<div style="left:4px;top:524px;width:80px;height:25px;display:flex;align-items:center;justify-content:center;background:#48a43c;"><span><span style="color:#fff"><b class="ty"><i>亚洲预选</i></b></span></span></div>
<div style="left:85px;top:524px;width:78px;height:25px;display:flex;align-items:center;justify-content:center;background:#efefef;"><span>24-10-15</span></div>
<div style="left:164px;top:524px;width:96px;height:25px;display:flex;align-items:center;justify-content:center;background:#efefef;"><span><i>日本</i></span></div>
<div style="left:261px;top:524px;width:93px;height:25px;display:flex;align-items:center;justify-content:center;background:#efefef;"><span><span style="color:#c41a1a">1-1</span>(0-0)</span></div>
<div style="left:355px;top:524px;width:40px;height:25px;display:flex;align-items:center;justify-content:center;background:#efefef;"><span>9-0</span></div>
<div style="left:396px;top:524px;width:96px;height:25px;display:flex;align-items:center;justify-content:center;background:#efefef;"><span><span style="color:#1e7e1e"><i>澳大利亚</i></span></span></div>
<div style="left:493px;top:524px;width:45px;height:25px;display:flex;align-items:center;justify-content:center;background:#fdf9f6;"><span>0.84</span></div>
<div style="left:539px;top:524px;width:98px;height:25px;display:flex;align-items:center;justify-content:center;background:#fdf9f6;"><span><i>一</i><span style="margin:0 1px 0 1.5px">/</span><i>球半</i></span></div>
<div style="left:638px;top:524px;width:47px;height:25px;display:flex;align-items:center;justify-content:center;background:#fdf9f6;"><span>0.98</span></div>
<div style="left:686px;top:524px;width:66px;height:25px;display:flex;align-items:center;justify-content:center;background:#f0f8fb;"><span>1.34</span></div>
<div style="left:753px;top:524px;width:67px;height:25px;display:flex;align-items:center;justify-content:center;background:#f0f8fb;"><span>4.72</span></div>
<div style="left:821px;top:524px;width:69px;height:25px;display:flex;align-items:center;justify-content:center;background:#f0f8fb;"><span>8.14</span></div>
<div style="left:891px;top:524px;width:39px;height:25px;display:flex;align-items:center;justify-content:center;background:#efefef;"><span><span style="color:#1e7e1e"><i>平</i></span></span></div>
<div style="left:931px;top:524px;width:39px;height:25px;display:flex;align-items:center;justify-content:center;background:#efefef;"><span><span style="color:#c41a1a"><i>赢</i></span></span></div>
<div style="left:971px;top:524px;width:59px;height:25px;display:flex;align-items:center;justify-content:center;background:#efefef;"><span><span style="color:#1a1aaa"><i>小</i></span></span></div>
<div style="left:3px;top:549px;width:1028px;height:1px;background:#c0c0c0"></div>
<div style="left:3px;top:523px;width:1px;height:27px;background:#c0c0c0"></div>
<div style="left:84px;top:523px;width:1px;height:27px;background:#c0c0c0"></div>
<div style="left:163px;top:523px;width:1px;height:27px;background:#c0c0c0"></div>
<div style="left:260px;top:523px;width:1px;height:27px;background:#c0c0c0"></div>
<div style="left:354px;top:523px;width:1px;height:27px;background:#c0c0c0"></div>
<div style="left:395px;top:523px;width:1px;height:27px;background:#c0c0c0"></div>
<div style="left:492px;top:523px;width:1px;height:27px;background:#c0c0c0"></div>
<div style="left:538px;top:523px;width:1px;height:27px;background:#c0c0c0"></div>
<div style="left:637px;top:523px;width:1px;height:27px;background:#c0c0c0"></div>
<div style="left:685px;top:523px;width:1px;height:27px;background:#c0c0c0"></div>
<div style="left:752px;top:523px;width:1px;height:27px;background:#c0c0c0"></div>
<div style="left:820px;top:523px;width:1px;height:27px;background:#c0c0c0"></div>
<div style="left:890px;top:523px;width:1px;height:27px;background:#c0c0c0"></div>
<div style="left:930px;top:523px;width:1px;height:27px;background:#c0c0c0"></div>
<div style="left:970px;top:523px;width:1px;height:27px;background:#c0c0c0"></div>
<div style="left:1030px;top:523px;width:1px;height:27px;background:#c0c0c0"></div>
<div style="left:4px;top:550px;width:80px;height:25px;display:flex;align-items:center;justify-content:center;background:#48a43c;"><span><span style="color:#fff"><b class="ty"><i>亚洲预选</i></b></span></span></div>
<div style="left:85px;top:550px;width:78px;height:25px;display:flex;align-items:center;justify-content:center;background:#ffffff;"><span>24-10-10</span></div>
<div style="left:164px;top:550px;width:96px;height:25px;display:flex;align-items:center;justify-content:center;background:#ffffff;"><span><span style="color:#1e7e1e"><i>澳大利亚</i></span></span></div>
<div style="left:261px;top:550px;width:93px;height:25px;display:flex;align-items:center;justify-content:center;background:#ffffff;"><span><span style="color:#c41a1a">3-1</span>(1-1)</span></div>
<div style="left:355px;top:550px;width:40px;height:25px;display:flex;align-items:center;justify-content:center;background:#ffffff;"><span>3-3</span></div>
<div style="left:396px;top:550px;width:96px;height:25px;display:flex;align-items:center;justify-content:center;background:#ffffff;"><span><i>中国</i></span></div>
<div style="left:493px;top:550px;width:45px;height:25px;display:flex;align-items:center;justify-content:center;background:#fdf9f6;"><span>1.03</span></div>
<div style="left:539px;top:550px;width:98px;height:25px;display:flex;align-items:center;justify-content:center;background:#fdf9f6;"><span><i>两球</i></span></div>
<div style="left:638px;top:550px;width:47px;height:25px;display:flex;align-items:center;justify-content:center;background:#fdf9f6;"><span>0.79</span></div>
<div style="left:686px;top:550px;width:66px;height:25px;display:flex;align-items:center;justify-content:center;background:#f0f8fb;"><span>1.15</span></div>
<div style="left:753px;top:550px;width:67px;height:25px;display:flex;align-items:center;justify-content:center;background:#f0f8fb;"><span>6.67</span></div>
<div style="left:821px;top:550px;width:69px;height:25px;display:flex;align-items:center;justify-content:center;background:#f0f8fb;"><span>16.06</span></div>
<div style="left:891px;top:550px;width:39px;height:25px;display:flex;align-items:center;justify-content:center;background:#ffffff;"><span><span style="color:#c41a1a"><i>胜</i></span></span></div>
<div style="left:931px;top:550px;width:39px;height:25px;display:flex;align-items:center;justify-content:center;background:#ffffff;"><span><span style="color:#1e7e1e"><i>走</i></span></span></div>
<div style="left:971px;top:550px;width:59px;height:25px;display:flex;align-items:center;justify-content:center;background:#ffffff;"><span><span style="color:#c41a1a"><i>大</i></span></span></div>
<div style="left:3px;top:575px;width:1028px;height:1px;background:#c0c0c0"></div>
<div style="left:3px;top:549px;width:1px;height:27px;background:#c0c0c0"></div>
<div style="left:84px;top:549px;width:1px;height:27px;background:#c0c0c0"></div>
<div style="left:163px;top:549px;width:1px;height:27px;background:#c0c0c0"></div>
<div style="left:260px;top:549px;width:1px;height:27px;background:#c0c0c0"></div>
<div style="left:354px;top:549px;width:1px;height:27px;background:#c0c0c0"></div>
<div style="left:395px;top:549px;width:1px;height:27px;background:#c0c0c0"></div>
<div style="left:492px;top:549px;width:1px;height:27px;background:#c0c0c0"></div>
<div style="left:538px;top:549px;width:1px;height:27px;background:#c0c0c0"></div>
<div style="left:637px;top:549px;width:1px;height:27px;background:#c0c0c0"></div>
<div style="left:685px;top:549px;width:1px;height:27px;background:#c0c0c0"></div>
<div style="left:752px;top:549px;width:1px;height:27px;background:#c0c0c0"></div>
<div style="left:820px;top:549px;width:1px;height:27px;background:#c0c0c0"></div>
<div style="left:890px;top:549px;width:1px;height:27px;background:#c0c0c0"></div>
<div style="left:930px;top:549px;width:1px;height:27px;background:#c0c0c0"></div>
<div style="left:970px;top:549px;width:1px;height:27px;background:#c0c0c0"></div>
<div style="left:1030px;top:549px;width:1px;height:27px;background:#c0c0c0"></div>
<div style="left:4px;top:576px;width:80px;height:25px;display:flex;align-items:center;justify-content:center;background:#48a43c;"><span><span style="color:#fff"><b class="ty"><i>亚洲预选</i></b></span></span></div>
<div style="left:85px;top:576px;width:78px;height:25px;display:flex;align-items:center;justify-content:center;background:#efefef;"><span>24-09-10</span></div>
<div style="left:164px;top:576px;width:96px;height:25px;display:flex;align-items:center;justify-content:center;background:#efefef;"><span><i>印度尼西亚</i></span></div>
<div style="left:261px;top:576px;width:93px;height:25px;display:flex;align-items:center;justify-content:center;background:#efefef;"><span><span style="color:#c41a1a">0-0</span>(0-0)</span></div>
<div style="left:355px;top:576px;width:40px;height:25px;display:flex;align-items:center;justify-content:center;background:#efefef;"><span>3-15</span></div>
<div style="left:396px;top:576px;width:96px;height:25px;display:flex;align-items:center;justify-content:center;background:#efefef;"><span><span style="color:#1e7e1e"><i>澳大利亚</i></span></span></div>
<div style="left:493px;top:576px;width:45px;height:25px;display:flex;align-items:center;justify-content:center;background:#fdf9f6;"><span>0.98</span></div>
<div style="left:539px;top:576px;width:98px;height:25px;display:flex;align-items:center;justify-content:center;background:#fdf9f6;"><span><i>受半</i><span style="margin:0 1px 0 1.5px">/</span><i>一</i></span></div>
<div style="left:638px;top:576px;width:47px;height:25px;display:flex;align-items:center;justify-content:center;background:#fdf9f6;"><span>0.84</span></div>
<div style="left:686px;top:576px;width:66px;height:25px;display:flex;align-items:center;justify-content:center;background:#f0f8fb;"><span>5.22</span></div>
<div style="left:753px;top:576px;width:67px;height:25px;display:flex;align-items:center;justify-content:center;background:#f0f8fb;"><span>3.58</span></div>
<div style="left:821px;top:576px;width:69px;height:25px;display:flex;align-items:center;justify-content:center;background:#f0f8fb;"><span>1.64</span></div>
<div style="left:891px;top:576px;width:39px;height:25px;display:flex;align-items:center;justify-content:center;background:#efefef;"><span><span style="color:#1e7e1e"><i>平</i></span></span></div>
<div style="left:931px;top:576px;width:39px;height:25px;display:flex;align-items:center;justify-content:center;background:#efefef;"><span><span style="color:#1a1aaa"><i>输</i></span></span></div>
<div style="left:971px;top:576px;width:59px;height:25px;display:flex;align-items:center;justify-content:center;background:#efefef;"><span><span style="color:#1a1aaa"><i>小</i></span></span></div>
<div style="left:3px;top:601px;width:1028px;height:1px;background:#c0c0c0"></div>
<div style="left:3px;top:575px;width:1px;height:27px;background:#c0c0c0"></div>
<div style="left:84px;top:575px;width:1px;height:27px;background:#c0c0c0"></div>
<div style="left:163px;top:575px;width:1px;height:27px;background:#c0c0c0"></div>
<div style="left:260px;top:575px;width:1px;height:27px;background:#c0c0c0"></div>
<div style="left:354px;top:575px;width:1px;height:27px;background:#c0c0c0"></div>
<div style="left:395px;top:575px;width:1px;height:27px;background:#c0c0c0"></div>
<div style="left:492px;top:575px;width:1px;height:27px;background:#c0c0c0"></div>
<div style="left:538px;top:575px;width:1px;height:27px;background:#c0c0c0"></div>
<div style="left:637px;top:575px;width:1px;height:27px;background:#c0c0c0"></div>
<div style="left:685px;top:575px;width:1px;height:27px;background:#c0c0c0"></div>
<div style="left:752px;top:575px;width:1px;height:27px;background:#c0c0c0"></div>
<div style="left:820px;top:575px;width:1px;height:27px;background:#c0c0c0"></div>
<div style="left:890px;top:575px;width:1px;height:27px;background:#c0c0c0"></div>
<div style="left:930px;top:575px;width:1px;height:27px;background:#c0c0c0"></div>
<div style="left:970px;top:575px;width:1px;height:27px;background:#c0c0c0"></div>
<div style="left:1030px;top:575px;width:1px;height:27px;background:#c0c0c0"></div>
<div style="left:4px;top:602px;width:80px;height:25px;display:flex;align-items:center;justify-content:center;background:#48a43c;"><span><span style="color:#fff"><b class="ty"><i>亚洲预选</i></b></span></span></div>
<div style="left:85px;top:602px;width:78px;height:25px;display:flex;align-items:center;justify-content:center;background:#ffffff;"><span>24-09-05</span></div>
<div style="left:164px;top:602px;width:96px;height:25px;display:flex;align-items:center;justify-content:center;background:#ffffff;"><span><span style="color:#1e7e1e"><span class="bd">1</span><i>澳大利亚</i></span></span></div>
<div style="left:261px;top:602px;width:93px;height:25px;display:flex;align-items:center;justify-content:center;background:#ffffff;"><span><span style="color:#c41a1a">0-1</span>(0-0)</span></div>
<div style="left:355px;top:602px;width:40px;height:25px;display:flex;align-items:center;justify-content:center;background:#ffffff;"><span>4-3</span></div>
<div style="left:396px;top:602px;width:96px;height:25px;display:flex;align-items:center;justify-content:center;background:#ffffff;"><span><i>巴林</i></span></div>
<div style="left:493px;top:602px;width:45px;height:25px;display:flex;align-items:center;justify-content:center;background:#fdf9f6;"><span>0.90</span></div>
<div style="left:539px;top:602px;width:98px;height:25px;display:flex;align-items:center;justify-content:center;background:#fdf9f6;"><span><i>球半</i><span style="margin:0 1px 0 1.5px">/</span><i>两</i></span></div>
<div style="left:638px;top:602px;width:47px;height:25px;display:flex;align-items:center;justify-content:center;background:#fdf9f6;"><span>0.92</span></div>
<div style="left:686px;top:602px;width:66px;height:25px;display:flex;align-items:center;justify-content:center;background:#f0f8fb;"><span>1.16</span></div>
<div style="left:753px;top:602px;width:67px;height:25px;display:flex;align-items:center;justify-content:center;background:#f0f8fb;"><span>6.30</span></div>
<div style="left:821px;top:602px;width:69px;height:25px;display:flex;align-items:center;justify-content:center;background:#f0f8fb;"><span>16.36</span></div>
<div style="left:891px;top:602px;width:39px;height:25px;display:flex;align-items:center;justify-content:center;background:#ffffff;"><span><span style="color:#1a1aaa"><i>负</i></span></span></div>
<div style="left:931px;top:602px;width:39px;height:25px;display:flex;align-items:center;justify-content:center;background:#ffffff;"><span><span style="color:#1a1aaa"><i>输</i></span></span></div>
<div style="left:971px;top:602px;width:59px;height:25px;display:flex;align-items:center;justify-content:center;background:#ffffff;"><span><span style="color:#1a1aaa"><i>小</i></span></span></div>
<div style="left:3px;top:627px;width:1028px;height:1px;background:#c0c0c0"></div>
<div style="left:3px;top:601px;width:1px;height:27px;background:#c0c0c0"></div>
<div style="left:84px;top:601px;width:1px;height:27px;background:#c0c0c0"></div>
<div style="left:163px;top:601px;width:1px;height:27px;background:#c0c0c0"></div>
<div style="left:260px;top:601px;width:1px;height:27px;background:#c0c0c0"></div>
<div style="left:354px;top:601px;width:1px;height:27px;background:#c0c0c0"></div>
<div style="left:395px;top:601px;width:1px;height:27px;background:#c0c0c0"></div>
<div style="left:492px;top:601px;width:1px;height:27px;background:#c0c0c0"></div>
<div style="left:538px;top:601px;width:1px;height:27px;background:#c0c0c0"></div>
<div style="left:637px;top:601px;width:1px;height:27px;background:#c0c0c0"></div>
<div style="left:685px;top:601px;width:1px;height:27px;background:#c0c0c0"></div>
<div style="left:752px;top:601px;width:1px;height:27px;background:#c0c0c0"></div>
<div style="left:820px;top:601px;width:1px;height:27px;background:#c0c0c0"></div>
<div style="left:890px;top:601px;width:1px;height:27px;background:#c0c0c0"></div>
<div style="left:930px;top:601px;width:1px;height:27px;background:#c0c0c0"></div>
<div style="left:970px;top:601px;width:1px;height:27px;background:#c0c0c0"></div>
<div style="left:1030px;top:601px;width:1px;height:27px;background:#c0c0c0"></div>
<div style="left:4px;top:628px;width:80px;height:25px;display:flex;align-items:center;justify-content:center;background:#48a43c;"><span><span style="color:#fff"><b class="ty"><i>亚洲预选</i></b></span></span></div>
<div style="left:85px;top:628px;width:78px;height:25px;display:flex;align-items:center;justify-content:center;background:#efefef;"><span>24-06-11</span></div>
<div style="left:164px;top:628px;width:96px;height:25px;display:flex;align-items:center;justify-content:center;background:#efefef;"><span><span style="color:#1e7e1e"><i>澳大利亚</i></span></span></div>
<div style="left:261px;top:628px;width:93px;height:25px;display:flex;align-items:center;justify-content:center;background:#efefef;"><span><span style="color:#c41a1a">5-0</span>(3-0)</span></div>
<div style="left:355px;top:628px;width:40px;height:25px;display:flex;align-items:center;justify-content:center;background:#efefef;"><span>4-2</span></div>
<div style="left:396px;top:628px;width:96px;height:25px;display:flex;align-items:center;justify-content:center;background:#efefef;"><span><i>巴勒斯坦</i></span></div>
<div style="left:493px;top:628px;width:45px;height:25px;display:flex;align-items:center;justify-content:center;background:#fdf9f6;"><span>0.94</span></div>
<div style="left:539px;top:628px;width:98px;height:25px;display:flex;align-items:center;justify-content:center;background:#fdf9f6;"><span><i>球半</i><span style="margin:0 1px 0 1.5px">/</span><i>两</i></span></div>
<div style="left:638px;top:628px;width:47px;height:25px;display:flex;align-items:center;justify-content:center;background:#fdf9f6;"><span>0.88</span></div>
<div style="left:686px;top:628px;width:66px;height:25px;display:flex;align-items:center;justify-content:center;background:#f0f8fb;"><span>1.19</span></div>
<div style="left:753px;top:628px;width:67px;height:25px;display:flex;align-items:center;justify-content:center;background:#f0f8fb;"><span>5.97</span></div>
<div style="left:821px;top:628px;width:69px;height:25px;display:flex;align-items:center;justify-content:center;background:#f0f8fb;"><span>13.03</span></div>
<div style="left:891px;top:628px;width:39px;height:25px;display:flex;align-items:center;justify-content:center;background:#efefef;"><span><span style="color:#c41a1a"><i>胜</i></span></span></div>
<div style="left:931px;top:628px;width:39px;height:25px;display:flex;align-items:center;justify-content:center;background:#efefef;"><span><span style="color:#c41a1a"><i>赢</i></span></span></div>
<div style="left:971px;top:628px;width:59px;height:25px;display:flex;align-items:center;justify-content:center;background:#efefef;"><span><span style="color:#c41a1a"><i>大</i></span></span></div>
<div style="left:3px;top:653px;width:1028px;height:1px;background:#c0c0c0"></div>
<div style="left:3px;top:627px;width:1px;height:27px;background:#c0c0c0"></div>
<div style="left:84px;top:627px;width:1px;height:27px;background:#c0c0c0"></div>
<div style="left:163px;top:627px;width:1px;height:27px;background:#c0c0c0"></div>
<div style="left:260px;top:627px;width:1px;height:27px;background:#c0c0c0"></div>
<div style="left:354px;top:627px;width:1px;height:27px;background:#c0c0c0"></div>
<div style="left:395px;top:627px;width:1px;height:27px;background:#c0c0c0"></div>
<div style="left:492px;top:627px;width:1px;height:27px;background:#c0c0c0"></div>
<div style="left:538px;top:627px;width:1px;height:27px;background:#c0c0c0"></div>
<div style="left:637px;top:627px;width:1px;height:27px;background:#c0c0c0"></div>
<div style="left:685px;top:627px;width:1px;height:27px;background:#c0c0c0"></div>
<div style="left:752px;top:627px;width:1px;height:27px;background:#c0c0c0"></div>
<div style="left:820px;top:627px;width:1px;height:27px;background:#c0c0c0"></div>
<div style="left:890px;top:627px;width:1px;height:27px;background:#c0c0c0"></div>
<div style="left:930px;top:627px;width:1px;height:27px;background:#c0c0c0"></div>
<div style="left:970px;top:627px;width:1px;height:27px;background:#c0c0c0"></div>
<div style="left:1030px;top:627px;width:1px;height:27px;background:#c0c0c0"></div>
<div style="left:4px;top:654px;width:80px;height:25px;display:flex;align-items:center;justify-content:center;background:#48a43c;"><span><span style="color:#fff"><b class="ty"><i>亚洲预选</i></b></span></span></div>
<div style="left:85px;top:654px;width:78px;height:25px;display:flex;align-items:center;justify-content:center;background:#ffffff;"><span>24-06-06</span></div>
<div style="left:164px;top:654px;width:96px;height:25px;display:flex;align-items:center;justify-content:center;background:#ffffff;"><span><i>孟加拉国</i></span></div>
<div style="left:261px;top:654px;width:93px;height:25px;display:flex;align-items:center;justify-content:center;background:#ffffff;"><span><span style="color:#c41a1a">0-2</span>(0-1)</span></div>
<div style="left:355px;top:654px;width:40px;height:25px;display:flex;align-items:center;justify-content:center;background:#ffffff;"><span>1-9</span></div>
<div style="left:396px;top:654px;width:96px;height:25px;display:flex;align-items:center;justify-content:center;background:#ffffff;"><span><span style="color:#1e7e1e"><i>澳大利亚</i></span></span></div>
<div style="left:493px;top:654px;width:45px;height:25px;display:flex;align-items:center;justify-content:center;background:#fdf9f6;"><span>0.92</span></div>
<div style="left:539px;top:654px;width:98px;height:25px;display:flex;align-items:center;justify-content:center;background:#fdf9f6;"><span><i>受三球半</i></span></div>
<div style="left:638px;top:654px;width:47px;height:25px;display:flex;align-items:center;justify-content:center;background:#fdf9f6;"><span>0.90</span></div>
<div style="left:686px;top:654px;width:66px;height:25px;display:flex;align-items:center;justify-content:center;background:#f0f8fb;"><span>46.67</span></div>
<div style="left:753px;top:654px;width:67px;height:25px;display:flex;align-items:center;justify-content:center;background:#f0f8fb;"><span>17.73</span></div>
<div style="left:821px;top:654px;width:69px;height:25px;display:flex;align-items:center;justify-content:center;background:#f0f8fb;"><span>1.01</span></div>
<div style="left:891px;top:654px;width:39px;height:25px;display:flex;align-items:center;justify-content:center;background:#ffffff;"><span><span style="color:#c41a1a"><i>胜</i></span></span></div>
<div style="left:931px;top:654px;width:39px;height:25px;display:flex;align-items:center;justify-content:center;background:#ffffff;"><span><span style="color:#1a1aaa"><i>输</i></span></span></div>
<div style="left:971px;top:654px;width:59px;height:25px;display:flex;align-items:center;justify-content:center;background:#ffffff;"><span><span style="color:#1a1aaa"><i>小</i></span></span></div>
<div style="left:3px;top:679px;width:1028px;height:1px;background:#c0c0c0"></div>
<div style="left:3px;top:653px;width:1px;height:27px;background:#c0c0c0"></div>
<div style="left:84px;top:653px;width:1px;height:27px;background:#c0c0c0"></div>
<div style="left:163px;top:653px;width:1px;height:27px;background:#c0c0c0"></div>
<div style="left:260px;top:653px;width:1px;height:27px;background:#c0c0c0"></div>
<div style="left:354px;top:653px;width:1px;height:27px;background:#c0c0c0"></div>
<div style="left:395px;top:653px;width:1px;height:27px;background:#c0c0c0"></div>
<div style="left:492px;top:653px;width:1px;height:27px;background:#c0c0c0"></div>
<div style="left:538px;top:653px;width:1px;height:27px;background:#c0c0c0"></div>
<div style="left:637px;top:653px;width:1px;height:27px;background:#c0c0c0"></div>
<div style="left:685px;top:653px;width:1px;height:27px;background:#c0c0c0"></div>
<div style="left:752px;top:653px;width:1px;height:27px;background:#c0c0c0"></div>
<div style="left:820px;top:653px;width:1px;height:27px;background:#c0c0c0"></div>
<div style="left:890px;top:653px;width:1px;height:27px;background:#c0c0c0"></div>
<div style="left:930px;top:653px;width:1px;height:27px;background:#c0c0c0"></div>
<div style="left:970px;top:653px;width:1px;height:27px;background:#c0c0c0"></div>
<div style="left:1030px;top:653px;width:1px;height:27px;background:#c0c0c0"></div>
<div style="left:4px;top:680px;width:80px;height:25px;display:flex;align-items:center;justify-content:center;background:#48a43c;"><span><span style="color:#fff"><b class="ty"><i>亚洲预选</i></b></span></span></div>
<div style="left:85px;top:680px;width:78px;height:25px;display:flex;align-items:center;justify-content:center;background:#efefef;"><span>24-03-26</span></div>
<div style="left:164px;top:680px;width:96px;height:25px;display:flex;align-items:center;justify-content:center;background:#efefef;"><span><i>黎巴嫩</i>(<i>中</i>)</span></div>
<div style="left:261px;top:680px;width:93px;height:25px;display:flex;align-items:center;justify-content:center;background:#efefef;"><span><span style="color:#c41a1a">0-5</span>(0-1)</span></div>
<div style="left:355px;top:680px;width:40px;height:25px;display:flex;align-items:center;justify-content:center;background:#efefef;"><span>1-3</span></div>
<div style="left:396px;top:680px;width:96px;height:25px;display:flex;align-items:center;justify-content:center;background:#efefef;"><span><span style="color:#1e7e1e"><i>澳大利亚</i></span></span></div>
<div style="left:493px;top:680px;width:45px;height:25px;display:flex;align-items:center;justify-content:center;background:#fdf9f6;"><span>0.88</span></div>
<div style="left:539px;top:680px;width:98px;height:25px;display:flex;align-items:center;justify-content:center;background:#fdf9f6;"><span><i>受球半</i><span style="margin:0 1px 0 1.5px">/</span><i>两</i></span></div>
<div style="left:638px;top:680px;width:47px;height:25px;display:flex;align-items:center;justify-content:center;background:#fdf9f6;"><span>0.94</span></div>
<div style="left:686px;top:680px;width:66px;height:25px;display:flex;align-items:center;justify-content:center;background:#f0f8fb;"><span>13.29</span></div>
<div style="left:753px;top:680px;width:67px;height:25px;display:flex;align-items:center;justify-content:center;background:#f0f8fb;"><span>5.90</span></div>
<div style="left:821px;top:680px;width:69px;height:25px;display:flex;align-items:center;justify-content:center;background:#f0f8fb;"><span>1.19</span></div>
<div style="left:891px;top:680px;width:39px;height:25px;display:flex;align-items:center;justify-content:center;background:#efefef;"><span><span style="color:#c41a1a"><i>胜</i></span></span></div>
<div style="left:931px;top:680px;width:39px;height:25px;display:flex;align-items:center;justify-content:center;background:#efefef;"><span><span style="color:#c41a1a"><i>赢</i></span></span></div>
<div style="left:971px;top:680px;width:59px;height:25px;display:flex;align-items:center;justify-content:center;background:#efefef;"><span><span style="color:#c41a1a"><i>大</i></span></span></div>
<div style="left:3px;top:705px;width:1028px;height:1px;background:#c0c0c0"></div>
<div style="left:3px;top:679px;width:1px;height:27px;background:#c0c0c0"></div>
<div style="left:84px;top:679px;width:1px;height:27px;background:#c0c0c0"></div>
<div style="left:163px;top:679px;width:1px;height:27px;background:#c0c0c0"></div>
<div style="left:260px;top:679px;width:1px;height:27px;background:#c0c0c0"></div>
<div style="left:354px;top:679px;width:1px;height:27px;background:#c0c0c0"></div>
<div style="left:395px;top:679px;width:1px;height:27px;background:#c0c0c0"></div>
<div style="left:492px;top:679px;width:1px;height:27px;background:#c0c0c0"></div>
<div style="left:538px;top:679px;width:1px;height:27px;background:#c0c0c0"></div>
<div style="left:637px;top:679px;width:1px;height:27px;background:#c0c0c0"></div>
<div style="left:685px;top:679px;width:1px;height:27px;background:#c0c0c0"></div>
<div style="left:752px;top:679px;width:1px;height:27px;background:#c0c0c0"></div>
<div style="left:820px;top:679px;width:1px;height:27px;background:#c0c0c0"></div>
<div style="left:890px;top:679px;width:1px;height:27px;background:#c0c0c0"></div>
<div style="left:930px;top:679px;width:1px;height:27px;background:#c0c0c0"></div>
<div style="left:970px;top:679px;width:1px;height:27px;background:#c0c0c0"></div>
<div style="left:1030px;top:679px;width:1px;height:27px;background:#c0c0c0"></div>
<div style="left:4px;top:445px;width:80px;height:1px;background:#c8dcc6"></div>
<div style="left:4px;top:471px;width:80px;height:1px;background:#9dd092"></div>
<div style="left:4px;top:497px;width:80px;height:1px;background:#9dd092"></div>
<div style="left:4px;top:523px;width:80px;height:1px;background:#9dd092"></div>
<div style="left:4px;top:549px;width:80px;height:1px;background:#9dd092"></div>
<div style="left:4px;top:575px;width:80px;height:1px;background:#9dd092"></div>
<div style="left:4px;top:601px;width:80px;height:1px;background:#9dd092"></div>
<div style="left:4px;top:627px;width:80px;height:1px;background:#9dd092"></div>
<div style="left:4px;top:653px;width:80px;height:1px;background:#9dd092"></div>
<div style="left:4px;top:679px;width:80px;height:1px;background:#9dd092"></div>
<div style="left:4px;top:705px;width:80px;height:1px;background:#dcefd8"></div>
<div style="left:4px;top:706px;width:1026px;height:25px;display:flex;align-items:center;justify-content:center;background:#fff;letter-spacing:0.18px;padding-top:2px;"><span><i>近</i><span style="color:#c41a1a">10</span><i>场</i>,<i>胜</i>5<i>平</i>4<i>负</i>1, <i>胜率</i>:<span style="color:#c41a1a">50%</span> <i>让胜率</i>:<span style="color:#c41a1a">40%</span> <i>大率</i>:<span style="color:#c41a1a">50%</span> <i>单率</i>:<span style="color:#c41a1a">30%</span></span></div>
<div style="left:3px;top:731px;width:1028px;height:1px;background:#c0c0c0"></div>
<div style="left:3px;top:705px;width:1px;height:27px;background:#c0c0c0"></div>
<div style="left:1030px;top:705px;width:1px;height:27px;background:#c0c0c0"></div>
<div style="left:382px;top:386px;white-space:nowrap;font-size:12px;line-height:18px;margin-top:1px"><i>近</i></div>
<div style="left:439px;top:386px;white-space:nowrap;font-size:12px;line-height:18px;margin-top:1px"><i>场</i></div>
<svg style="position:absolute;left:455px;top:387px" width="13" height="13" viewBox="0 0 13 13"><rect x="0.5" y="0.5" width="12" height="12" rx="2" fill="#fff" stroke="#767676"/></svg>
<div style="left:472px;top:386px;white-space:nowrap;font-size:12px;line-height:18px;margin-top:1px"><i>同客</i></div>
<svg style="position:absolute;left:500px;top:387px" width="13" height="13" viewBox="0 0 13 13"><rect x="0" y="0" width="13" height="13" rx="2" fill="#0075ff"/><path d="M2.6 6.6 L5.2 9.2 L10.4 3.4" stroke="#fff" stroke-width="1.8" fill="none"/></svg>
<div style="left:513px;top:386px;white-space:nowrap;font-size:12px;line-height:18px;margin-top:1px"><i>亚洲预选</i></div>
<svg style="position:absolute;left:561px;top:387px" width="13" height="13" viewBox="0 0 13 13"><rect x="0" y="0" width="13" height="13" rx="2" fill="#0075ff"/><path d="M2.6 6.6 L5.2 9.2 L10.4 3.4" stroke="#fff" stroke-width="1.8" fill="none"/></svg>
<div style="left:574px;top:386px;white-space:nowrap;font-size:12px;line-height:18px;margin-top:1px"><i>亚洲杯</i></div>
<svg style="position:absolute;left:610px;top:387px" width="13" height="13" viewBox="0 0 13 13"><rect x="0" y="0" width="13" height="13" rx="2" fill="#0075ff"/><path d="M2.6 6.6 L5.2 9.2 L10.4 3.4" stroke="#fff" stroke-width="1.8" fill="none"/></svg>
<div style="left:623px;top:386px;white-space:nowrap;font-size:12px;line-height:18px;margin-top:1px"><i>国际友谊</i></div>
<svg style="position:absolute;left:671px;top:387px" width="13" height="13" viewBox="0 0 13 13"><rect x="0" y="0" width="13" height="13" rx="2" fill="#0075ff"/><path d="M2.6 6.6 L5.2 9.2 L10.4 3.4" stroke="#fff" stroke-width="1.8" fill="none"/></svg>
<div style="left:684px;top:386px;white-space:nowrap;font-size:12px;line-height:18px;margin-top:1px"><i>世界杯</i></div>
</body></html>
